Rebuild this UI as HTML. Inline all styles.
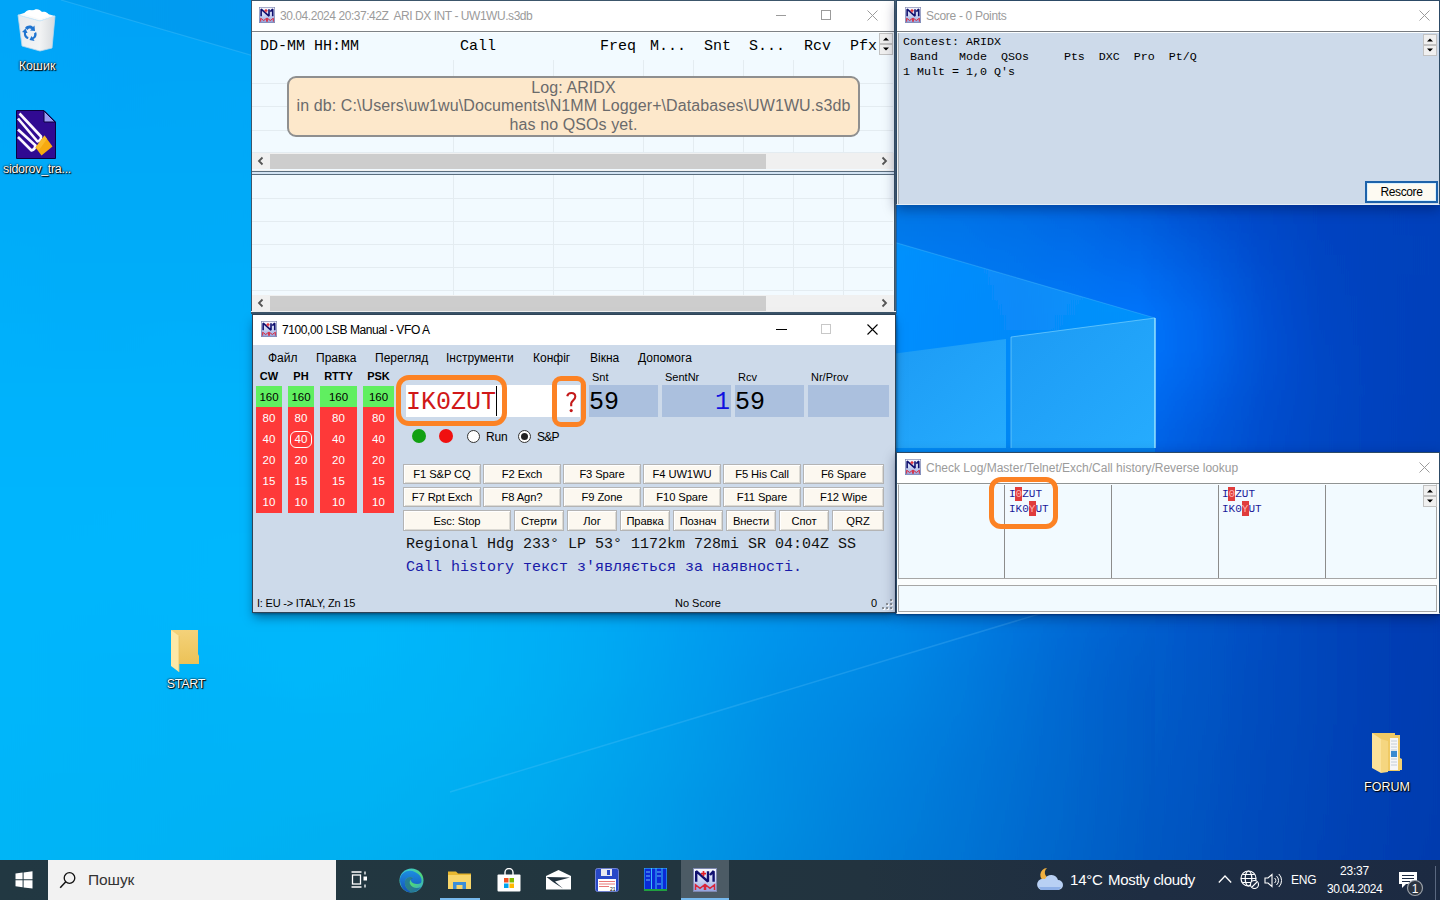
<!DOCTYPE html>
<html><head><meta charset="utf-8">
<style>
*{margin:0;padding:0;box-sizing:border-box}
html,body{width:1440px;height:900px;overflow:hidden}
body{position:relative;font-family:"Liberation Sans",sans-serif;background:#02a8f8;color:#000}
.a{position:absolute;white-space:nowrap}
.mono{font-family:"Liberation Mono",monospace}
.win{position:absolute;background:#fff;border:1px solid #41586c;overflow:hidden}
.tbar{position:absolute;left:0;top:0;right:0;height:31px;background:#fff;border-bottom:1px solid #8e979f}
.ttl{position:absolute;top:8px;font-size:12px;white-space:nowrap;letter-spacing:0}
.dlbl{position:absolute;color:#fff;font-size:12.5px;text-align:center;text-shadow:1px 1px 1px #000,0 0 2px #000,0 0 1px #000;white-space:nowrap}
.btn{position:absolute;background:#fcf8f0;border:1px solid #b4b4b4;box-shadow:inset 1px 1px 0 #fff,inset -1px -1px 0 #dcdad4;font-size:12px;text-align:center;color:#000;white-space:nowrap;letter-spacing:-0.1px}
.band{position:absolute;font-size:11.5px;text-align:center;line-height:21px;height:21px;padding-top:1px}
.g{background:#60ef60;color:#000}
.r{background:#fe3939;color:#fff}
.vl{position:absolute;width:1px;background:#e4ecf1}
.hl{position:absolute;height:1px;background:#e4ecf1}
.sbar{position:absolute;height:16px;background:#f0f0f0}
.thumb{position:absolute;top:1px;height:14px;background:#cdcdcd}
.lbl{position:absolute;font-size:11px;white-space:nowrap}
.fld{position:absolute;background:#abc0de}
</style></head>
<body>
<svg width="0" height="0" style="position:absolute">
<defs>
<linearGradient id="n1g" x1="0" y1="0" x2="0" y2="1"><stop offset="0" stop-color="#fbfbff"/><stop offset="0.55" stop-color="#c8d2f2"/><stop offset="1" stop-color="#8d9fdc"/></linearGradient>
<symbol id="n1mm" viewBox="0 0 24 24">
<rect x="0" y="0" width="24" height="24" fill="url(#n1g)"/>
<rect x="0.5" y="0.5" width="23" height="23" fill="none" stroke="#7f88b0" stroke-width="1"/>
<path d="M3.2 13.8V3.2L15 13.6V3.2M17 7L20.6 3.2V13.8" fill="none" stroke="#10106e" stroke-width="2.4" stroke-linejoin="bevel" stroke-linecap="butt"/>
<path d="M8 5.6h5M10.5 3v5.2" stroke="#e42026" stroke-width="1.7"/>
<path d="M2.5 22V16.8L7 20.3L11.5 16.8V22M12.5 22V16.8L17 20.3L21.5 16.8V22" fill="none" stroke="#d8263a" stroke-width="1.5"/>
</symbol>
</defs>
</svg>

<svg class="a" style="left:0;top:0" width="1440" height="900" viewBox="0 0 1440 900"><defs><linearGradient id="w0" x1="-60" x2="1500" y1="0" y2="0" gradientUnits="userSpaceOnUse"><stop offset="0.0000" stop-color="#07a1f0"/><stop offset="0.0385" stop-color="#069fef"/><stop offset="0.0769" stop-color="#059def"/><stop offset="0.1154" stop-color="#049cf0"/><stop offset="0.1538" stop-color="#039bf1"/><stop offset="0.1923" stop-color="#019bf2"/><stop offset="0.2308" stop-color="#019bf3"/><stop offset="0.2692" stop-color="#019af2"/><stop offset="0.3077" stop-color="#0198f2"/><stop offset="0.3462" stop-color="#0196f1"/><stop offset="0.3846" stop-color="#0193ef"/><stop offset="0.4231" stop-color="#018fed"/><stop offset="0.4615" stop-color="#018aeb"/><stop offset="0.5000" stop-color="#0183e8"/><stop offset="0.5385" stop-color="#017ce5"/><stop offset="0.5769" stop-color="#0174e2"/><stop offset="0.6154" stop-color="#016ce0"/><stop offset="0.6538" stop-color="#0165dd"/><stop offset="0.6923" stop-color="#025dda"/><stop offset="0.7308" stop-color="#0256d5"/><stop offset="0.7692" stop-color="#024fcf"/><stop offset="0.8077" stop-color="#0249ca"/><stop offset="0.8462" stop-color="#0343c5"/><stop offset="0.8846" stop-color="#0340c1"/><stop offset="0.9231" stop-color="#033dbe"/><stop offset="0.9615" stop-color="#033bbb"/><stop offset="1.0000" stop-color="#0338b8"/></linearGradient><linearGradient id="w1" x1="-60" x2="1500" y1="0" y2="0" gradientUnits="userSpaceOnUse"><stop offset="0.0000" stop-color="#07a1ef"/><stop offset="0.0385" stop-color="#069fef"/><stop offset="0.0769" stop-color="#059def"/><stop offset="0.1154" stop-color="#049cef"/><stop offset="0.1538" stop-color="#039bf0"/><stop offset="0.1923" stop-color="#019bf2"/><stop offset="0.2308" stop-color="#019bf2"/><stop offset="0.2692" stop-color="#009af2"/><stop offset="0.3077" stop-color="#0198f1"/><stop offset="0.3462" stop-color="#0196f0"/><stop offset="0.3846" stop-color="#0193ef"/><stop offset="0.4231" stop-color="#018fed"/><stop offset="0.4615" stop-color="#018aea"/><stop offset="0.5000" stop-color="#0183e7"/><stop offset="0.5385" stop-color="#017ce4"/><stop offset="0.5769" stop-color="#0174e1"/><stop offset="0.6154" stop-color="#016dde"/><stop offset="0.6538" stop-color="#0165dc"/><stop offset="0.6923" stop-color="#025ed8"/><stop offset="0.7308" stop-color="#0256d4"/><stop offset="0.7692" stop-color="#024fce"/><stop offset="0.8077" stop-color="#0348c9"/><stop offset="0.8462" stop-color="#0343c4"/><stop offset="0.8846" stop-color="#0340c0"/><stop offset="0.9231" stop-color="#033dbd"/><stop offset="0.9615" stop-color="#033bba"/><stop offset="1.0000" stop-color="#0339b8"/></linearGradient><linearGradient id="w2" x1="-60" x2="1500" y1="0" y2="0" gradientUnits="userSpaceOnUse"><stop offset="0.0000" stop-color="#07a2ef"/><stop offset="0.0385" stop-color="#069fee"/><stop offset="0.0769" stop-color="#059eee"/><stop offset="0.1154" stop-color="#049cef"/><stop offset="0.1538" stop-color="#039cf0"/><stop offset="0.1923" stop-color="#019cf1"/><stop offset="0.2308" stop-color="#019bf2"/><stop offset="0.2692" stop-color="#009af1"/><stop offset="0.3077" stop-color="#0098f1"/><stop offset="0.3462" stop-color="#0196f0"/><stop offset="0.3846" stop-color="#0193ee"/><stop offset="0.4231" stop-color="#018fec"/><stop offset="0.4615" stop-color="#018aea"/><stop offset="0.5000" stop-color="#0183e7"/><stop offset="0.5385" stop-color="#017ce3"/><stop offset="0.5769" stop-color="#0175e0"/><stop offset="0.6154" stop-color="#016ddd"/><stop offset="0.6538" stop-color="#0166db"/><stop offset="0.6923" stop-color="#025fd8"/><stop offset="0.7308" stop-color="#0257d3"/><stop offset="0.7692" stop-color="#024fce"/><stop offset="0.8077" stop-color="#0349c8"/><stop offset="0.8462" stop-color="#0343c3"/><stop offset="0.8846" stop-color="#0340bf"/><stop offset="0.9231" stop-color="#033ebc"/><stop offset="0.9615" stop-color="#033cba"/><stop offset="1.0000" stop-color="#033ab7"/></linearGradient><linearGradient id="w3" x1="-60" x2="1500" y1="0" y2="0" gradientUnits="userSpaceOnUse"><stop offset="0.0000" stop-color="#07a2ee"/><stop offset="0.0385" stop-color="#06a0ee"/><stop offset="0.0769" stop-color="#059eee"/><stop offset="0.1154" stop-color="#049dee"/><stop offset="0.1538" stop-color="#039cef"/><stop offset="0.1923" stop-color="#019cf1"/><stop offset="0.2308" stop-color="#019bf1"/><stop offset="0.2692" stop-color="#009af1"/><stop offset="0.3077" stop-color="#0098f0"/><stop offset="0.3462" stop-color="#0196ef"/><stop offset="0.3846" stop-color="#0193ee"/><stop offset="0.4231" stop-color="#018fec"/><stop offset="0.4615" stop-color="#018ae9"/><stop offset="0.5000" stop-color="#0184e6"/><stop offset="0.5385" stop-color="#017de3"/><stop offset="0.5769" stop-color="#0175e0"/><stop offset="0.6154" stop-color="#016edd"/><stop offset="0.6538" stop-color="#0167db"/><stop offset="0.6923" stop-color="#0260d8"/><stop offset="0.7308" stop-color="#0258d4"/><stop offset="0.7692" stop-color="#0250ce"/><stop offset="0.8077" stop-color="#0349c7"/><stop offset="0.8462" stop-color="#0343c2"/><stop offset="0.8846" stop-color="#0340be"/><stop offset="0.9231" stop-color="#033ebc"/><stop offset="0.9615" stop-color="#033cb9"/><stop offset="1.0000" stop-color="#033ab7"/></linearGradient><linearGradient id="w4" x1="-60" x2="1500" y1="0" y2="0" gradientUnits="userSpaceOnUse"><stop offset="0.0000" stop-color="#07a2ee"/><stop offset="0.0385" stop-color="#06a0ee"/><stop offset="0.0769" stop-color="#059eee"/><stop offset="0.1154" stop-color="#049dee"/><stop offset="0.1538" stop-color="#039cef"/><stop offset="0.1923" stop-color="#029cf0"/><stop offset="0.2308" stop-color="#019bf1"/><stop offset="0.2692" stop-color="#019af1"/><stop offset="0.3077" stop-color="#0198f0"/><stop offset="0.3462" stop-color="#0196ef"/><stop offset="0.3846" stop-color="#0193ee"/><stop offset="0.4231" stop-color="#018fec"/><stop offset="0.4615" stop-color="#018ae9"/><stop offset="0.5000" stop-color="#0184e6"/><stop offset="0.5385" stop-color="#017de3"/><stop offset="0.5769" stop-color="#0176e0"/><stop offset="0.6154" stop-color="#016fdd"/><stop offset="0.6538" stop-color="#0169db"/><stop offset="0.6923" stop-color="#0262d9"/><stop offset="0.7308" stop-color="#025ad5"/><stop offset="0.7692" stop-color="#0352cf"/><stop offset="0.8077" stop-color="#034ac8"/><stop offset="0.8462" stop-color="#0344c2"/><stop offset="0.8846" stop-color="#0340be"/><stop offset="0.9231" stop-color="#033fbc"/><stop offset="0.9615" stop-color="#033db9"/><stop offset="1.0000" stop-color="#033bb7"/></linearGradient><linearGradient id="w5" x1="-60" x2="1500" y1="0" y2="0" gradientUnits="userSpaceOnUse"><stop offset="0.0000" stop-color="#06a2ee"/><stop offset="0.0385" stop-color="#06a0ed"/><stop offset="0.0769" stop-color="#059fee"/><stop offset="0.1154" stop-color="#049dee"/><stop offset="0.1538" stop-color="#039def"/><stop offset="0.1923" stop-color="#029cf0"/><stop offset="0.2308" stop-color="#019bf0"/><stop offset="0.2692" stop-color="#019af0"/><stop offset="0.3077" stop-color="#0198f0"/><stop offset="0.3462" stop-color="#0196ef"/><stop offset="0.3846" stop-color="#0193ee"/><stop offset="0.4231" stop-color="#018fec"/><stop offset="0.4615" stop-color="#018aea"/><stop offset="0.5000" stop-color="#0184e7"/><stop offset="0.5385" stop-color="#017ee4"/><stop offset="0.5769" stop-color="#0177e0"/><stop offset="0.6154" stop-color="#0171de"/><stop offset="0.6538" stop-color="#016bdd"/><stop offset="0.6923" stop-color="#0264db"/><stop offset="0.7308" stop-color="#025dd7"/><stop offset="0.7692" stop-color="#0354d1"/><stop offset="0.8077" stop-color="#034bc9"/><stop offset="0.8462" stop-color="#0344c2"/><stop offset="0.8846" stop-color="#0341be"/><stop offset="0.9231" stop-color="#033fbc"/><stop offset="0.9615" stop-color="#033eb9"/><stop offset="1.0000" stop-color="#033cb7"/></linearGradient><linearGradient id="w6" x1="-60" x2="1500" y1="0" y2="0" gradientUnits="userSpaceOnUse"><stop offset="0.0000" stop-color="#06a3ed"/><stop offset="0.0385" stop-color="#06a1ed"/><stop offset="0.0769" stop-color="#059fed"/><stop offset="0.1154" stop-color="#049eee"/><stop offset="0.1538" stop-color="#039dee"/><stop offset="0.1923" stop-color="#029cef"/><stop offset="0.2308" stop-color="#019bf0"/><stop offset="0.2692" stop-color="#019af0"/><stop offset="0.3077" stop-color="#0198ef"/><stop offset="0.3462" stop-color="#0196ef"/><stop offset="0.3846" stop-color="#0193ed"/><stop offset="0.4231" stop-color="#018fec"/><stop offset="0.4615" stop-color="#018bea"/><stop offset="0.5000" stop-color="#0185e8"/><stop offset="0.5385" stop-color="#017fe5"/><stop offset="0.5769" stop-color="#0179e2"/><stop offset="0.6154" stop-color="#0172df"/><stop offset="0.6538" stop-color="#016ddf"/><stop offset="0.6923" stop-color="#0267de"/><stop offset="0.7308" stop-color="#0260da"/><stop offset="0.7692" stop-color="#0357d4"/><stop offset="0.8077" stop-color="#034ccb"/><stop offset="0.8462" stop-color="#0345c4"/><stop offset="0.8846" stop-color="#0342bf"/><stop offset="0.9231" stop-color="#0340bc"/><stop offset="0.9615" stop-color="#033fba"/><stop offset="1.0000" stop-color="#033db7"/></linearGradient><linearGradient id="w7" x1="-60" x2="1500" y1="0" y2="0" gradientUnits="userSpaceOnUse"><stop offset="0.0000" stop-color="#06a3ed"/><stop offset="0.0385" stop-color="#06a1ed"/><stop offset="0.0769" stop-color="#05a0ed"/><stop offset="0.1154" stop-color="#049eee"/><stop offset="0.1538" stop-color="#039dee"/><stop offset="0.1923" stop-color="#029cef"/><stop offset="0.2308" stop-color="#019bef"/><stop offset="0.2692" stop-color="#019aef"/><stop offset="0.3077" stop-color="#0198ef"/><stop offset="0.3462" stop-color="#0196ee"/><stop offset="0.3846" stop-color="#0193ee"/><stop offset="0.4231" stop-color="#0190ec"/><stop offset="0.4615" stop-color="#018beb"/><stop offset="0.5000" stop-color="#0186e9"/><stop offset="0.5385" stop-color="#0180e7"/><stop offset="0.5769" stop-color="#027ae4"/><stop offset="0.6154" stop-color="#0175e2"/><stop offset="0.6538" stop-color="#0170e4"/><stop offset="0.6923" stop-color="#026be2"/><stop offset="0.7308" stop-color="#0364df"/><stop offset="0.7692" stop-color="#035bd9"/><stop offset="0.8077" stop-color="#034fce"/><stop offset="0.8462" stop-color="#0347c6"/><stop offset="0.8846" stop-color="#0343c0"/><stop offset="0.9231" stop-color="#0341bd"/><stop offset="0.9615" stop-color="#0340ba"/><stop offset="1.0000" stop-color="#033db7"/></linearGradient><linearGradient id="w8" x1="-60" x2="1500" y1="0" y2="0" gradientUnits="userSpaceOnUse"><stop offset="0.0000" stop-color="#06a4ed"/><stop offset="0.0385" stop-color="#06a2ed"/><stop offset="0.0769" stop-color="#05a0ed"/><stop offset="0.1154" stop-color="#049fed"/><stop offset="0.1538" stop-color="#039eee"/><stop offset="0.1923" stop-color="#029dee"/><stop offset="0.2308" stop-color="#029cef"/><stop offset="0.2692" stop-color="#019aef"/><stop offset="0.3077" stop-color="#0199ef"/><stop offset="0.3462" stop-color="#0196ee"/><stop offset="0.3846" stop-color="#0193ee"/><stop offset="0.4231" stop-color="#0190ed"/><stop offset="0.4615" stop-color="#018ceb"/><stop offset="0.5000" stop-color="#0187ea"/><stop offset="0.5385" stop-color="#0282e9"/><stop offset="0.5769" stop-color="#027de8"/><stop offset="0.6154" stop-color="#0278e9"/><stop offset="0.6538" stop-color="#0174e9"/><stop offset="0.6923" stop-color="#026fe7"/><stop offset="0.7308" stop-color="#0369e5"/><stop offset="0.7692" stop-color="#0360e0"/><stop offset="0.8077" stop-color="#0453d4"/><stop offset="0.8462" stop-color="#0449c9"/><stop offset="0.8846" stop-color="#0343c1"/><stop offset="0.9231" stop-color="#0342bd"/><stop offset="0.9615" stop-color="#0341ba"/><stop offset="1.0000" stop-color="#033eb7"/></linearGradient><linearGradient id="w9" x1="-60" x2="1500" y1="0" y2="0" gradientUnits="userSpaceOnUse"><stop offset="0.0000" stop-color="#06a4ed"/><stop offset="0.0385" stop-color="#06a2ed"/><stop offset="0.0769" stop-color="#05a1ed"/><stop offset="0.1154" stop-color="#049fed"/><stop offset="0.1538" stop-color="#039eee"/><stop offset="0.1923" stop-color="#029dee"/><stop offset="0.2308" stop-color="#029cee"/><stop offset="0.2692" stop-color="#019aef"/><stop offset="0.3077" stop-color="#0199ef"/><stop offset="0.3462" stop-color="#0196ee"/><stop offset="0.3846" stop-color="#0194ee"/><stop offset="0.4231" stop-color="#0190ed"/><stop offset="0.4615" stop-color="#018cec"/><stop offset="0.5000" stop-color="#0288ec"/><stop offset="0.5385" stop-color="#0284eb"/><stop offset="0.5769" stop-color="#027fec"/><stop offset="0.6154" stop-color="#027bef"/><stop offset="0.6538" stop-color="#0177ef"/><stop offset="0.6923" stop-color="#0273ec"/><stop offset="0.7308" stop-color="#046eec"/><stop offset="0.7692" stop-color="#0467e9"/><stop offset="0.8077" stop-color="#045add"/><stop offset="0.8462" stop-color="#044ccd"/><stop offset="0.8846" stop-color="#0444c2"/><stop offset="0.9231" stop-color="#0442bd"/><stop offset="0.9615" stop-color="#0441ba"/><stop offset="1.0000" stop-color="#033eb7"/></linearGradient><linearGradient id="w10" x1="-60" x2="1500" y1="0" y2="0" gradientUnits="userSpaceOnUse"><stop offset="0.0000" stop-color="#06a4ec"/><stop offset="0.0385" stop-color="#06a3ec"/><stop offset="0.0769" stop-color="#05a1ec"/><stop offset="0.1154" stop-color="#04a0ed"/><stop offset="0.1538" stop-color="#039eed"/><stop offset="0.1923" stop-color="#039dee"/><stop offset="0.2308" stop-color="#029cee"/><stop offset="0.2692" stop-color="#029bee"/><stop offset="0.3077" stop-color="#0199ee"/><stop offset="0.3462" stop-color="#0197ee"/><stop offset="0.3846" stop-color="#0194ee"/><stop offset="0.4231" stop-color="#0191ee"/><stop offset="0.4615" stop-color="#018ded"/><stop offset="0.5000" stop-color="#0289ed"/><stop offset="0.5385" stop-color="#0285ee"/><stop offset="0.5769" stop-color="#0281ef"/><stop offset="0.6154" stop-color="#027ef2"/><stop offset="0.6538" stop-color="#027af2"/><stop offset="0.6923" stop-color="#0376f1"/><stop offset="0.7308" stop-color="#0473f3"/><stop offset="0.7692" stop-color="#046ef3"/><stop offset="0.8077" stop-color="#0460e5"/><stop offset="0.8462" stop-color="#044fd1"/><stop offset="0.8846" stop-color="#0445c3"/><stop offset="0.9231" stop-color="#0442bd"/><stop offset="0.9615" stop-color="#0441ba"/><stop offset="1.0000" stop-color="#033eb6"/></linearGradient><linearGradient id="w11" x1="-60" x2="1500" y1="0" y2="0" gradientUnits="userSpaceOnUse"><stop offset="0.0000" stop-color="#06a5ec"/><stop offset="0.0385" stop-color="#06a3ec"/><stop offset="0.0769" stop-color="#05a1ec"/><stop offset="0.1154" stop-color="#04a0ed"/><stop offset="0.1538" stop-color="#039fed"/><stop offset="0.1923" stop-color="#039ded"/><stop offset="0.2308" stop-color="#029cee"/><stop offset="0.2692" stop-color="#029bee"/><stop offset="0.3077" stop-color="#0299ee"/><stop offset="0.3462" stop-color="#0197ee"/><stop offset="0.3846" stop-color="#0194ee"/><stop offset="0.4231" stop-color="#0291ee"/><stop offset="0.4615" stop-color="#028eee"/><stop offset="0.5000" stop-color="#028aee"/><stop offset="0.5385" stop-color="#0287ef"/><stop offset="0.5769" stop-color="#0283f1"/><stop offset="0.6154" stop-color="#0280f4"/><stop offset="0.6538" stop-color="#027df5"/><stop offset="0.6923" stop-color="#0379f5"/><stop offset="0.7308" stop-color="#0477f8"/><stop offset="0.7692" stop-color="#0474fa"/><stop offset="0.8077" stop-color="#0365ec"/><stop offset="0.8462" stop-color="#0351d4"/><stop offset="0.8846" stop-color="#0445c4"/><stop offset="0.9231" stop-color="#0442be"/><stop offset="0.9615" stop-color="#0440ba"/><stop offset="1.0000" stop-color="#033eb6"/></linearGradient><linearGradient id="w12" x1="-60" x2="1500" y1="0" y2="0" gradientUnits="userSpaceOnUse"><stop offset="0.0000" stop-color="#06a5ec"/><stop offset="0.0385" stop-color="#06a3ec"/><stop offset="0.0769" stop-color="#05a2ec"/><stop offset="0.1154" stop-color="#04a0ec"/><stop offset="0.1538" stop-color="#039fed"/><stop offset="0.1923" stop-color="#039eed"/><stop offset="0.2308" stop-color="#029ced"/><stop offset="0.2692" stop-color="#029bee"/><stop offset="0.3077" stop-color="#0299ee"/><stop offset="0.3462" stop-color="#0297ee"/><stop offset="0.3846" stop-color="#0295ee"/><stop offset="0.4231" stop-color="#0292ee"/><stop offset="0.4615" stop-color="#028fef"/><stop offset="0.5000" stop-color="#028bef"/><stop offset="0.5385" stop-color="#0288f1"/><stop offset="0.5769" stop-color="#0285f3"/><stop offset="0.6154" stop-color="#0281f5"/><stop offset="0.6538" stop-color="#037ef7"/><stop offset="0.6923" stop-color="#037bf8"/><stop offset="0.7308" stop-color="#0479fb"/><stop offset="0.7692" stop-color="#0475fc"/><stop offset="0.8077" stop-color="#0366ed"/><stop offset="0.8462" stop-color="#0352d5"/><stop offset="0.8846" stop-color="#0446c5"/><stop offset="0.9231" stop-color="#0442be"/><stop offset="0.9615" stop-color="#0440b9"/><stop offset="1.0000" stop-color="#033db5"/></linearGradient><linearGradient id="w13" x1="-60" x2="1500" y1="0" y2="0" gradientUnits="userSpaceOnUse"><stop offset="0.0000" stop-color="#06a6ec"/><stop offset="0.0385" stop-color="#06a4ec"/><stop offset="0.0769" stop-color="#05a2ec"/><stop offset="0.1154" stop-color="#04a1ec"/><stop offset="0.1538" stop-color="#049fec"/><stop offset="0.1923" stop-color="#039eed"/><stop offset="0.2308" stop-color="#029ded"/><stop offset="0.2692" stop-color="#029bed"/><stop offset="0.3077" stop-color="#0299ee"/><stop offset="0.3462" stop-color="#0297ee"/><stop offset="0.3846" stop-color="#0295ee"/><stop offset="0.4231" stop-color="#0292ee"/><stop offset="0.4615" stop-color="#028fef"/><stop offset="0.5000" stop-color="#028cf0"/><stop offset="0.5385" stop-color="#0289f1"/><stop offset="0.5769" stop-color="#0286f3"/><stop offset="0.6154" stop-color="#0282f6"/><stop offset="0.6538" stop-color="#037ff7"/><stop offset="0.6923" stop-color="#037cf9"/><stop offset="0.7308" stop-color="#0478fa"/><stop offset="0.7692" stop-color="#0472f8"/><stop offset="0.8077" stop-color="#0363e9"/><stop offset="0.8462" stop-color="#0351d3"/><stop offset="0.8846" stop-color="#0447c5"/><stop offset="0.9231" stop-color="#0442be"/><stop offset="0.9615" stop-color="#0440b9"/><stop offset="1.0000" stop-color="#033db5"/></linearGradient><linearGradient id="w14" x1="-60" x2="1500" y1="0" y2="0" gradientUnits="userSpaceOnUse"><stop offset="0.0000" stop-color="#06a6eb"/><stop offset="0.0385" stop-color="#06a4eb"/><stop offset="0.0769" stop-color="#05a3eb"/><stop offset="0.1154" stop-color="#04a1ec"/><stop offset="0.1538" stop-color="#04a0ec"/><stop offset="0.1923" stop-color="#039eec"/><stop offset="0.2308" stop-color="#039ded"/><stop offset="0.2692" stop-color="#029bed"/><stop offset="0.3077" stop-color="#0299ed"/><stop offset="0.3462" stop-color="#0297ee"/><stop offset="0.3846" stop-color="#0295ee"/><stop offset="0.4231" stop-color="#0292ee"/><stop offset="0.4615" stop-color="#0290ef"/><stop offset="0.5000" stop-color="#028df0"/><stop offset="0.5385" stop-color="#0289f2"/><stop offset="0.5769" stop-color="#0286f3"/><stop offset="0.6154" stop-color="#0383f5"/><stop offset="0.6538" stop-color="#037ff6"/><stop offset="0.6923" stop-color="#037bf7"/><stop offset="0.7308" stop-color="#0476f7"/><stop offset="0.7692" stop-color="#046df2"/><stop offset="0.8077" stop-color="#035ee3"/><stop offset="0.8462" stop-color="#044fd0"/><stop offset="0.8846" stop-color="#0447c4"/><stop offset="0.9231" stop-color="#0442be"/><stop offset="0.9615" stop-color="#0440b9"/><stop offset="1.0000" stop-color="#033cb4"/></linearGradient><linearGradient id="w15" x1="-60" x2="1500" y1="0" y2="0" gradientUnits="userSpaceOnUse"><stop offset="0.0000" stop-color="#06a6eb"/><stop offset="0.0385" stop-color="#06a4eb"/><stop offset="0.0769" stop-color="#05a3eb"/><stop offset="0.1154" stop-color="#04a1eb"/><stop offset="0.1538" stop-color="#04a0ec"/><stop offset="0.1923" stop-color="#039eec"/><stop offset="0.2308" stop-color="#039dec"/><stop offset="0.2692" stop-color="#029bed"/><stop offset="0.3077" stop-color="#0299ed"/><stop offset="0.3462" stop-color="#0297ed"/><stop offset="0.3846" stop-color="#0295ee"/><stop offset="0.4231" stop-color="#0293ee"/><stop offset="0.4615" stop-color="#0290ef"/><stop offset="0.5000" stop-color="#028df0"/><stop offset="0.5385" stop-color="#028af1"/><stop offset="0.5769" stop-color="#0287f3"/><stop offset="0.6154" stop-color="#0383f4"/><stop offset="0.6538" stop-color="#037ff5"/><stop offset="0.6923" stop-color="#037af4"/><stop offset="0.7308" stop-color="#0473f3"/><stop offset="0.7692" stop-color="#0468eb"/><stop offset="0.8077" stop-color="#035add"/><stop offset="0.8462" stop-color="#044ece"/><stop offset="0.8846" stop-color="#0446c3"/><stop offset="0.9231" stop-color="#0442bd"/><stop offset="0.9615" stop-color="#033fb8"/><stop offset="1.0000" stop-color="#033cb3"/></linearGradient><linearGradient id="w16" x1="-60" x2="1500" y1="0" y2="0" gradientUnits="userSpaceOnUse"><stop offset="0.0000" stop-color="#06a7eb"/><stop offset="0.0385" stop-color="#06a5eb"/><stop offset="0.0769" stop-color="#05a3eb"/><stop offset="0.1154" stop-color="#04a2eb"/><stop offset="0.1538" stop-color="#04a0eb"/><stop offset="0.1923" stop-color="#039fec"/><stop offset="0.2308" stop-color="#039dec"/><stop offset="0.2692" stop-color="#039bec"/><stop offset="0.3077" stop-color="#029aed"/><stop offset="0.3462" stop-color="#0298ed"/><stop offset="0.3846" stop-color="#0295ed"/><stop offset="0.4231" stop-color="#0293ee"/><stop offset="0.4615" stop-color="#0290ee"/><stop offset="0.5000" stop-color="#028def"/><stop offset="0.5385" stop-color="#028af0"/><stop offset="0.5769" stop-color="#0387f1"/><stop offset="0.6154" stop-color="#0383f2"/><stop offset="0.6538" stop-color="#037ef2"/><stop offset="0.6923" stop-color="#0379f1"/><stop offset="0.7308" stop-color="#0470ed"/><stop offset="0.7692" stop-color="#0464e5"/><stop offset="0.8077" stop-color="#0357d9"/><stop offset="0.8462" stop-color="#044dcc"/><stop offset="0.8846" stop-color="#0446c2"/><stop offset="0.9231" stop-color="#0442bc"/><stop offset="0.9615" stop-color="#033fb7"/><stop offset="1.0000" stop-color="#033bb3"/></linearGradient><linearGradient id="w17" x1="-60" x2="1500" y1="0" y2="0" gradientUnits="userSpaceOnUse"><stop offset="0.0000" stop-color="#06a7ea"/><stop offset="0.0385" stop-color="#06a5ea"/><stop offset="0.0769" stop-color="#05a3ea"/><stop offset="0.1154" stop-color="#05a2eb"/><stop offset="0.1538" stop-color="#04a0eb"/><stop offset="0.1923" stop-color="#049feb"/><stop offset="0.2308" stop-color="#039deb"/><stop offset="0.2692" stop-color="#039bec"/><stop offset="0.3077" stop-color="#039aec"/><stop offset="0.3462" stop-color="#0298ec"/><stop offset="0.3846" stop-color="#0295ed"/><stop offset="0.4231" stop-color="#0293ed"/><stop offset="0.4615" stop-color="#0290ee"/><stop offset="0.5000" stop-color="#028dee"/><stop offset="0.5385" stop-color="#038aef"/><stop offset="0.5769" stop-color="#0387f0"/><stop offset="0.6154" stop-color="#0382f0"/><stop offset="0.6538" stop-color="#037def"/><stop offset="0.6923" stop-color="#0377ed"/><stop offset="0.7308" stop-color="#046ee8"/><stop offset="0.7692" stop-color="#0462e0"/><stop offset="0.8077" stop-color="#0456d5"/><stop offset="0.8462" stop-color="#044cca"/><stop offset="0.8846" stop-color="#0446c1"/><stop offset="0.9231" stop-color="#0441bb"/><stop offset="0.9615" stop-color="#033eb6"/><stop offset="1.0000" stop-color="#033ab2"/></linearGradient><linearGradient id="w18" x1="-60" x2="1500" y1="0" y2="0" gradientUnits="userSpaceOnUse"><stop offset="0.0000" stop-color="#06a7ea"/><stop offset="0.0385" stop-color="#06a5ea"/><stop offset="0.0769" stop-color="#05a4ea"/><stop offset="0.1154" stop-color="#05a2ea"/><stop offset="0.1538" stop-color="#04a0ea"/><stop offset="0.1923" stop-color="#049feb"/><stop offset="0.2308" stop-color="#039deb"/><stop offset="0.2692" stop-color="#039beb"/><stop offset="0.3077" stop-color="#039aeb"/><stop offset="0.3462" stop-color="#0397ec"/><stop offset="0.3846" stop-color="#0295ec"/><stop offset="0.4231" stop-color="#0293ec"/><stop offset="0.4615" stop-color="#0290ed"/><stop offset="0.5000" stop-color="#038ded"/><stop offset="0.5385" stop-color="#038aee"/><stop offset="0.5769" stop-color="#0386ee"/><stop offset="0.6154" stop-color="#0382ed"/><stop offset="0.6538" stop-color="#037ceb"/><stop offset="0.6923" stop-color="#0375e8"/><stop offset="0.7308" stop-color="#046ce3"/><stop offset="0.7692" stop-color="#0461db"/><stop offset="0.8077" stop-color="#0456d1"/><stop offset="0.8462" stop-color="#044cc8"/><stop offset="0.8846" stop-color="#0445c0"/><stop offset="0.9231" stop-color="#0441ba"/><stop offset="0.9615" stop-color="#033db5"/><stop offset="1.0000" stop-color="#0339b1"/></linearGradient><linearGradient id="w19" x1="-60" x2="1500" y1="0" y2="0" gradientUnits="userSpaceOnUse"><stop offset="0.0000" stop-color="#06a7ea"/><stop offset="0.0385" stop-color="#06a6ea"/><stop offset="0.0769" stop-color="#05a4ea"/><stop offset="0.1154" stop-color="#05a2ea"/><stop offset="0.1538" stop-color="#04a0ea"/><stop offset="0.1923" stop-color="#049fea"/><stop offset="0.2308" stop-color="#039dea"/><stop offset="0.2692" stop-color="#039beb"/><stop offset="0.3077" stop-color="#0399eb"/><stop offset="0.3462" stop-color="#0397eb"/><stop offset="0.3846" stop-color="#0395eb"/><stop offset="0.4231" stop-color="#0393ec"/><stop offset="0.4615" stop-color="#0390ec"/><stop offset="0.5000" stop-color="#038dec"/><stop offset="0.5385" stop-color="#0389ec"/><stop offset="0.5769" stop-color="#0386eb"/><stop offset="0.6154" stop-color="#0381ea"/><stop offset="0.6538" stop-color="#037be8"/><stop offset="0.6923" stop-color="#0374e4"/><stop offset="0.7308" stop-color="#046bde"/><stop offset="0.7692" stop-color="#0460d7"/><stop offset="0.8077" stop-color="#0456ce"/><stop offset="0.8462" stop-color="#044cc6"/><stop offset="0.8846" stop-color="#0445be"/><stop offset="0.9231" stop-color="#0440b8"/><stop offset="0.9615" stop-color="#033cb4"/><stop offset="1.0000" stop-color="#0339b0"/></linearGradient><linearGradient id="w20" x1="-60" x2="1500" y1="0" y2="0" gradientUnits="userSpaceOnUse"><stop offset="0.0000" stop-color="#06a8e9"/><stop offset="0.0385" stop-color="#06a6e9"/><stop offset="0.0769" stop-color="#05a4e9"/><stop offset="0.1154" stop-color="#05a2e9"/><stop offset="0.1538" stop-color="#04a1e9"/><stop offset="0.1923" stop-color="#049fea"/><stop offset="0.2308" stop-color="#049dea"/><stop offset="0.2692" stop-color="#039bea"/><stop offset="0.3077" stop-color="#0399ea"/><stop offset="0.3462" stop-color="#0397ea"/><stop offset="0.3846" stop-color="#0395ea"/><stop offset="0.4231" stop-color="#0392eb"/><stop offset="0.4615" stop-color="#0390eb"/><stop offset="0.5000" stop-color="#038cea"/><stop offset="0.5385" stop-color="#0389ea"/><stop offset="0.5769" stop-color="#0385e9"/><stop offset="0.6154" stop-color="#0380e7"/><stop offset="0.6538" stop-color="#037ae4"/><stop offset="0.6923" stop-color="#0373e0"/><stop offset="0.7308" stop-color="#046ada"/><stop offset="0.7692" stop-color="#0460d3"/><stop offset="0.8077" stop-color="#0456cc"/><stop offset="0.8462" stop-color="#044cc4"/><stop offset="0.8846" stop-color="#0445bd"/><stop offset="0.9231" stop-color="#0440b7"/><stop offset="0.9615" stop-color="#033cb2"/><stop offset="1.0000" stop-color="#0338af"/></linearGradient><linearGradient id="w21" x1="-60" x2="1500" y1="0" y2="0" gradientUnits="userSpaceOnUse"><stop offset="0.0000" stop-color="#06a8e9"/><stop offset="0.0385" stop-color="#06a6e9"/><stop offset="0.0769" stop-color="#05a4e9"/><stop offset="0.1154" stop-color="#05a2e9"/><stop offset="0.1538" stop-color="#04a1e9"/><stop offset="0.1923" stop-color="#049fe9"/><stop offset="0.2308" stop-color="#049de9"/><stop offset="0.2692" stop-color="#039be9"/><stop offset="0.3077" stop-color="#0399e9"/><stop offset="0.3462" stop-color="#0397e9"/><stop offset="0.3846" stop-color="#0395e9"/><stop offset="0.4231" stop-color="#0392e9"/><stop offset="0.4615" stop-color="#038fe9"/><stop offset="0.5000" stop-color="#038ce9"/><stop offset="0.5385" stop-color="#0388e8"/><stop offset="0.5769" stop-color="#0384e6"/><stop offset="0.6154" stop-color="#037fe4"/><stop offset="0.6538" stop-color="#0379e1"/><stop offset="0.6923" stop-color="#0372dc"/><stop offset="0.7308" stop-color="#0469d6"/><stop offset="0.7692" stop-color="#045fd0"/><stop offset="0.8077" stop-color="#0456c9"/><stop offset="0.8462" stop-color="#034dc2"/><stop offset="0.8846" stop-color="#0345bc"/><stop offset="0.9231" stop-color="#043fb6"/><stop offset="0.9615" stop-color="#033bb1"/><stop offset="1.0000" stop-color="#0338ae"/></linearGradient><linearGradient id="w22" x1="-60" x2="1500" y1="0" y2="0" gradientUnits="userSpaceOnUse"><stop offset="0.0000" stop-color="#06a8e8"/><stop offset="0.0385" stop-color="#06a6e8"/><stop offset="0.0769" stop-color="#05a4e8"/><stop offset="0.1154" stop-color="#05a2e8"/><stop offset="0.1538" stop-color="#05a1e8"/><stop offset="0.1923" stop-color="#049fe8"/><stop offset="0.2308" stop-color="#049de8"/><stop offset="0.2692" stop-color="#049be8"/><stop offset="0.3077" stop-color="#0399e8"/><stop offset="0.3462" stop-color="#0397e8"/><stop offset="0.3846" stop-color="#0394e8"/><stop offset="0.4231" stop-color="#0391e8"/><stop offset="0.4615" stop-color="#038fe8"/><stop offset="0.5000" stop-color="#038be7"/><stop offset="0.5385" stop-color="#0388e6"/><stop offset="0.5769" stop-color="#0383e4"/><stop offset="0.6154" stop-color="#037ee1"/><stop offset="0.6538" stop-color="#0378de"/><stop offset="0.6923" stop-color="#0371d9"/><stop offset="0.7308" stop-color="#0469d3"/><stop offset="0.7692" stop-color="#045fce"/><stop offset="0.8077" stop-color="#0355c7"/><stop offset="0.8462" stop-color="#034dc1"/><stop offset="0.8846" stop-color="#0345ba"/><stop offset="0.9231" stop-color="#043fb5"/><stop offset="0.9615" stop-color="#033bb1"/><stop offset="1.0000" stop-color="#0337ad"/></linearGradient><linearGradient id="w23" x1="-60" x2="1500" y1="0" y2="0" gradientUnits="userSpaceOnUse"><stop offset="0.0000" stop-color="#07a8e8"/><stop offset="0.0385" stop-color="#06a6e8"/><stop offset="0.0769" stop-color="#06a4e8"/><stop offset="0.1154" stop-color="#05a2e8"/><stop offset="0.1538" stop-color="#05a1e8"/><stop offset="0.1923" stop-color="#049fe8"/><stop offset="0.2308" stop-color="#049de8"/><stop offset="0.2692" stop-color="#049be8"/><stop offset="0.3077" stop-color="#0399e8"/><stop offset="0.3462" stop-color="#0396e7"/><stop offset="0.3846" stop-color="#0394e7"/><stop offset="0.4231" stop-color="#0391e7"/><stop offset="0.4615" stop-color="#038ee6"/><stop offset="0.5000" stop-color="#038be5"/><stop offset="0.5385" stop-color="#0387e4"/><stop offset="0.5769" stop-color="#0382e2"/><stop offset="0.6154" stop-color="#037ddf"/><stop offset="0.6538" stop-color="#0377db"/><stop offset="0.6923" stop-color="#0370d6"/><stop offset="0.7308" stop-color="#0468d1"/><stop offset="0.7692" stop-color="#045ecb"/><stop offset="0.8077" stop-color="#0355c5"/><stop offset="0.8462" stop-color="#034cbf"/><stop offset="0.8846" stop-color="#0345ba"/><stop offset="0.9231" stop-color="#033fb4"/><stop offset="0.9615" stop-color="#033bb0"/><stop offset="1.0000" stop-color="#0337ac"/></linearGradient><linearGradient id="w24" x1="-60" x2="1500" y1="0" y2="0" gradientUnits="userSpaceOnUse"><stop offset="0.0000" stop-color="#07a8e7"/><stop offset="0.0385" stop-color="#06a6e7"/><stop offset="0.0769" stop-color="#06a4e7"/><stop offset="0.1154" stop-color="#05a2e7"/><stop offset="0.1538" stop-color="#05a0e7"/><stop offset="0.1923" stop-color="#049fe7"/><stop offset="0.2308" stop-color="#049de7"/><stop offset="0.2692" stop-color="#049ae7"/><stop offset="0.3077" stop-color="#0498e7"/><stop offset="0.3462" stop-color="#0396e6"/><stop offset="0.3846" stop-color="#0393e6"/><stop offset="0.4231" stop-color="#0390e5"/><stop offset="0.4615" stop-color="#038de5"/><stop offset="0.5000" stop-color="#038ae4"/><stop offset="0.5385" stop-color="#0386e2"/><stop offset="0.5769" stop-color="#0381e0"/><stop offset="0.6154" stop-color="#037cdd"/><stop offset="0.6538" stop-color="#0376d9"/><stop offset="0.6923" stop-color="#036fd4"/><stop offset="0.7308" stop-color="#0467cf"/><stop offset="0.7692" stop-color="#045eca"/><stop offset="0.8077" stop-color="#0355c4"/><stop offset="0.8462" stop-color="#034cbe"/><stop offset="0.8846" stop-color="#0345b9"/><stop offset="0.9231" stop-color="#033fb4"/><stop offset="0.9615" stop-color="#033bb0"/><stop offset="1.0000" stop-color="#0337ac"/></linearGradient><linearGradient id="w25" x1="-60" x2="1500" y1="0" y2="0" gradientUnits="userSpaceOnUse"><stop offset="0.0000" stop-color="#07a8e7"/><stop offset="0.0385" stop-color="#06a6e7"/><stop offset="0.0769" stop-color="#06a4e6"/><stop offset="0.1154" stop-color="#05a2e6"/><stop offset="0.1538" stop-color="#05a0e6"/><stop offset="0.1923" stop-color="#049ee6"/><stop offset="0.2308" stop-color="#049ce6"/><stop offset="0.2692" stop-color="#049ae6"/><stop offset="0.3077" stop-color="#0498e6"/><stop offset="0.3462" stop-color="#0495e5"/><stop offset="0.3846" stop-color="#0393e5"/><stop offset="0.4231" stop-color="#0390e4"/><stop offset="0.4615" stop-color="#038ce3"/><stop offset="0.5000" stop-color="#0389e2"/><stop offset="0.5385" stop-color="#0385e0"/><stop offset="0.5769" stop-color="#0380dd"/><stop offset="0.6154" stop-color="#037bda"/><stop offset="0.6538" stop-color="#0375d6"/><stop offset="0.6923" stop-color="#036ed2"/><stop offset="0.7308" stop-color="#0366cd"/><stop offset="0.7692" stop-color="#035dc8"/><stop offset="0.8077" stop-color="#0354c3"/><stop offset="0.8462" stop-color="#034cbd"/><stop offset="0.8846" stop-color="#0345b8"/><stop offset="0.9231" stop-color="#033fb4"/><stop offset="0.9615" stop-color="#033baf"/><stop offset="1.0000" stop-color="#0337ac"/></linearGradient><linearGradient id="w26" x1="-60" x2="1500" y1="0" y2="0" gradientUnits="userSpaceOnUse"><stop offset="0.0000" stop-color="#07a8e6"/><stop offset="0.0385" stop-color="#06a6e6"/><stop offset="0.0769" stop-color="#06a4e6"/><stop offset="0.1154" stop-color="#05a2e6"/><stop offset="0.1538" stop-color="#05a0e5"/><stop offset="0.1923" stop-color="#059ee5"/><stop offset="0.2308" stop-color="#049ce5"/><stop offset="0.2692" stop-color="#049ae5"/><stop offset="0.3077" stop-color="#0497e4"/><stop offset="0.3462" stop-color="#0495e4"/><stop offset="0.3846" stop-color="#0492e3"/><stop offset="0.4231" stop-color="#038fe3"/><stop offset="0.4615" stop-color="#038ce1"/><stop offset="0.5000" stop-color="#0388e0"/><stop offset="0.5385" stop-color="#0384de"/><stop offset="0.5769" stop-color="#037fdb"/><stop offset="0.6154" stop-color="#037ad8"/><stop offset="0.6538" stop-color="#0373d5"/><stop offset="0.6923" stop-color="#036dd0"/><stop offset="0.7308" stop-color="#0365cc"/><stop offset="0.7692" stop-color="#035cc7"/><stop offset="0.8077" stop-color="#0353c2"/><stop offset="0.8462" stop-color="#034bbc"/><stop offset="0.8846" stop-color="#0344b8"/><stop offset="0.9231" stop-color="#033fb3"/><stop offset="0.9615" stop-color="#033baf"/><stop offset="1.0000" stop-color="#0337ab"/></linearGradient><linearGradient id="w27" x1="-60" x2="1500" y1="0" y2="0" gradientUnits="userSpaceOnUse"><stop offset="0.0000" stop-color="#07a8e6"/><stop offset="0.0385" stop-color="#06a6e5"/><stop offset="0.0769" stop-color="#06a4e5"/><stop offset="0.1154" stop-color="#05a2e5"/><stop offset="0.1538" stop-color="#05a0e5"/><stop offset="0.1923" stop-color="#059ee4"/><stop offset="0.2308" stop-color="#049ce4"/><stop offset="0.2692" stop-color="#0499e4"/><stop offset="0.3077" stop-color="#0497e3"/><stop offset="0.3462" stop-color="#0494e3"/><stop offset="0.3846" stop-color="#0491e2"/><stop offset="0.4231" stop-color="#048ee1"/><stop offset="0.4615" stop-color="#038be0"/><stop offset="0.5000" stop-color="#0387de"/><stop offset="0.5385" stop-color="#0383dc"/><stop offset="0.5769" stop-color="#037eda"/><stop offset="0.6154" stop-color="#0378d6"/><stop offset="0.6538" stop-color="#0472d3"/><stop offset="0.6923" stop-color="#046bcf"/><stop offset="0.7308" stop-color="#0464ca"/><stop offset="0.7692" stop-color="#045bc6"/><stop offset="0.8077" stop-color="#0353c1"/><stop offset="0.8462" stop-color="#034bbc"/><stop offset="0.8846" stop-color="#0344b7"/><stop offset="0.9231" stop-color="#043fb3"/><stop offset="0.9615" stop-color="#033baf"/><stop offset="1.0000" stop-color="#0336ab"/></linearGradient><linearGradient id="w28" x1="-60" x2="1500" y1="0" y2="0" gradientUnits="userSpaceOnUse"><stop offset="0.0000" stop-color="#07a8e5"/><stop offset="0.0385" stop-color="#06a6e5"/><stop offset="0.0769" stop-color="#06a4e4"/><stop offset="0.1154" stop-color="#06a2e4"/><stop offset="0.1538" stop-color="#05a0e4"/><stop offset="0.1923" stop-color="#059ee3"/><stop offset="0.2308" stop-color="#059be3"/><stop offset="0.2692" stop-color="#0499e3"/><stop offset="0.3077" stop-color="#0496e2"/><stop offset="0.3462" stop-color="#0494e2"/><stop offset="0.3846" stop-color="#0491e1"/><stop offset="0.4231" stop-color="#048de0"/><stop offset="0.4615" stop-color="#048ade"/><stop offset="0.5000" stop-color="#0486dd"/><stop offset="0.5385" stop-color="#0482da"/><stop offset="0.5769" stop-color="#047dd8"/><stop offset="0.6154" stop-color="#0477d5"/><stop offset="0.6538" stop-color="#0471d1"/><stop offset="0.6923" stop-color="#046acd"/><stop offset="0.7308" stop-color="#0463c9"/><stop offset="0.7692" stop-color="#045bc4"/><stop offset="0.8077" stop-color="#0452c0"/><stop offset="0.8462" stop-color="#034abb"/><stop offset="0.8846" stop-color="#0344b6"/><stop offset="0.9231" stop-color="#043fb2"/><stop offset="0.9615" stop-color="#033bae"/><stop offset="1.0000" stop-color="#0336ab"/></linearGradient><linearGradient id="w29" x1="-60" x2="1500" y1="0" y2="0" gradientUnits="userSpaceOnUse"><stop offset="0.0000" stop-color="#07a8e4"/><stop offset="0.0385" stop-color="#06a6e4"/><stop offset="0.0769" stop-color="#06a4e4"/><stop offset="0.1154" stop-color="#06a2e3"/><stop offset="0.1538" stop-color="#059fe3"/><stop offset="0.1923" stop-color="#059de3"/><stop offset="0.2308" stop-color="#059be2"/><stop offset="0.2692" stop-color="#0498e2"/><stop offset="0.3077" stop-color="#0496e1"/><stop offset="0.3462" stop-color="#0493e0"/><stop offset="0.3846" stop-color="#0490df"/><stop offset="0.4231" stop-color="#048dde"/><stop offset="0.4615" stop-color="#0489dd"/><stop offset="0.5000" stop-color="#0485db"/><stop offset="0.5385" stop-color="#0481d9"/><stop offset="0.5769" stop-color="#047cd6"/><stop offset="0.6154" stop-color="#0476d3"/><stop offset="0.6538" stop-color="#0470cf"/><stop offset="0.6923" stop-color="#0469cc"/><stop offset="0.7308" stop-color="#0462c8"/><stop offset="0.7692" stop-color="#045ac3"/><stop offset="0.8077" stop-color="#0452bf"/><stop offset="0.8462" stop-color="#044aba"/><stop offset="0.8846" stop-color="#0443b6"/><stop offset="0.9231" stop-color="#043fb2"/><stop offset="0.9615" stop-color="#033aae"/><stop offset="1.0000" stop-color="#0336aa"/></linearGradient><linearGradient id="w30" x1="-60" x2="1500" y1="0" y2="0" gradientUnits="userSpaceOnUse"><stop offset="0.0000" stop-color="#07a8e4"/><stop offset="0.0385" stop-color="#06a6e3"/><stop offset="0.0769" stop-color="#06a4e3"/><stop offset="0.1154" stop-color="#06a1e3"/><stop offset="0.1538" stop-color="#059fe2"/><stop offset="0.1923" stop-color="#059de2"/><stop offset="0.2308" stop-color="#059ae1"/><stop offset="0.2692" stop-color="#0498e1"/><stop offset="0.3077" stop-color="#0495e0"/><stop offset="0.3462" stop-color="#0492df"/><stop offset="0.3846" stop-color="#048fde"/><stop offset="0.4231" stop-color="#048cdd"/><stop offset="0.4615" stop-color="#0488db"/><stop offset="0.5000" stop-color="#0484d9"/><stop offset="0.5385" stop-color="#047fd7"/><stop offset="0.5769" stop-color="#047ad4"/><stop offset="0.6154" stop-color="#0475d1"/><stop offset="0.6538" stop-color="#046fce"/><stop offset="0.6923" stop-color="#0468ca"/><stop offset="0.7308" stop-color="#0461c6"/><stop offset="0.7692" stop-color="#0459c2"/><stop offset="0.8077" stop-color="#0451be"/><stop offset="0.8462" stop-color="#044ab9"/><stop offset="0.8846" stop-color="#0443b5"/><stop offset="0.9231" stop-color="#043eb1"/><stop offset="0.9615" stop-color="#033aad"/><stop offset="1.0000" stop-color="#0336aa"/></linearGradient><linearGradient id="w31" x1="-60" x2="1500" y1="0" y2="0" gradientUnits="userSpaceOnUse"><stop offset="0.0000" stop-color="#07a8e3"/><stop offset="0.0385" stop-color="#07a6e3"/><stop offset="0.0769" stop-color="#06a3e2"/><stop offset="0.1154" stop-color="#06a1e2"/><stop offset="0.1538" stop-color="#059fe1"/><stop offset="0.1923" stop-color="#059ce1"/><stop offset="0.2308" stop-color="#059ae0"/><stop offset="0.2692" stop-color="#0597e0"/><stop offset="0.3077" stop-color="#0495df"/><stop offset="0.3462" stop-color="#0492de"/><stop offset="0.3846" stop-color="#048edd"/><stop offset="0.4231" stop-color="#048bdb"/><stop offset="0.4615" stop-color="#0487da"/><stop offset="0.5000" stop-color="#0483d8"/><stop offset="0.5385" stop-color="#047ed5"/><stop offset="0.5769" stop-color="#0479d3"/><stop offset="0.6154" stop-color="#0474d0"/><stop offset="0.6538" stop-color="#046ecc"/><stop offset="0.6923" stop-color="#0467c9"/><stop offset="0.7308" stop-color="#0460c5"/><stop offset="0.7692" stop-color="#0458c1"/><stop offset="0.8077" stop-color="#0451bd"/><stop offset="0.8462" stop-color="#044ab8"/><stop offset="0.8846" stop-color="#0443b4"/><stop offset="0.9231" stop-color="#043eb0"/><stop offset="0.9615" stop-color="#043aad"/><stop offset="1.0000" stop-color="#0336a9"/></linearGradient><linearGradient id="q0" x1="-60" x2="1500" y1="0" y2="0" gradientUnits="userSpaceOnUse"><stop offset="0.0000" stop-color="#00a6f9"/><stop offset="0.0385" stop-color="#00a5f8"/><stop offset="0.0769" stop-color="#00a4f8"/><stop offset="0.1154" stop-color="#00a3f8"/><stop offset="0.1538" stop-color="#01a2f7"/><stop offset="0.1923" stop-color="#02a2f7"/><stop offset="0.2308" stop-color="#02a2f7"/><stop offset="0.2692" stop-color="#02a2f7"/><stop offset="0.3077" stop-color="#02a2f7"/><stop offset="0.3462" stop-color="#02a1f7"/><stop offset="0.3846" stop-color="#02a0f7"/><stop offset="0.4231" stop-color="#02a0f7"/><stop offset="0.4615" stop-color="#039ff6"/><stop offset="0.5000" stop-color="#049ef6"/><stop offset="0.5385" stop-color="#059cf5"/><stop offset="0.5769" stop-color="#059bf5"/><stop offset="0.6154" stop-color="#0699f5"/><stop offset="0.6538" stop-color="#0797f5"/><stop offset="0.6923" stop-color="#0796f5"/><stop offset="0.7308" stop-color="#0795f6"/><stop offset="0.7692" stop-color="#0794f6"/><stop offset="0.8077" stop-color="#0692f5"/><stop offset="0.8462" stop-color="#0590f4"/><stop offset="0.8846" stop-color="#058df3"/><stop offset="0.9231" stop-color="#048af0"/><stop offset="0.9615" stop-color="#0385ee"/><stop offset="1.0000" stop-color="#0381eb"/></linearGradient><linearGradient id="q1" x1="-60" x2="1500" y1="0" y2="0" gradientUnits="userSpaceOnUse"><stop offset="0.0000" stop-color="#00a7f9"/><stop offset="0.0385" stop-color="#00a5f8"/><stop offset="0.0769" stop-color="#00a4f8"/><stop offset="0.1154" stop-color="#00a3f7"/><stop offset="0.1538" stop-color="#02a3f7"/><stop offset="0.1923" stop-color="#02a3f7"/><stop offset="0.2308" stop-color="#02a3f7"/><stop offset="0.2692" stop-color="#02a3f7"/><stop offset="0.3077" stop-color="#02a2f7"/><stop offset="0.3462" stop-color="#02a1f7"/><stop offset="0.3846" stop-color="#02a1f7"/><stop offset="0.4231" stop-color="#02a0f7"/><stop offset="0.4615" stop-color="#039ff6"/><stop offset="0.5000" stop-color="#049ef6"/><stop offset="0.5385" stop-color="#049cf6"/><stop offset="0.5769" stop-color="#059af5"/><stop offset="0.6154" stop-color="#0698f5"/><stop offset="0.6538" stop-color="#0796f5"/><stop offset="0.6923" stop-color="#0795f6"/><stop offset="0.7308" stop-color="#0794f6"/><stop offset="0.7692" stop-color="#0793f6"/><stop offset="0.8077" stop-color="#0692f5"/><stop offset="0.8462" stop-color="#0590f4"/><stop offset="0.8846" stop-color="#048df3"/><stop offset="0.9231" stop-color="#0489f0"/><stop offset="0.9615" stop-color="#0385ee"/><stop offset="1.0000" stop-color="#0380eb"/></linearGradient><linearGradient id="q2" x1="-60" x2="1500" y1="0" y2="0" gradientUnits="userSpaceOnUse"><stop offset="0.0000" stop-color="#00a7f9"/><stop offset="0.0385" stop-color="#00a6f8"/><stop offset="0.0769" stop-color="#00a5f8"/><stop offset="0.1154" stop-color="#00a4f7"/><stop offset="0.1538" stop-color="#02a4f7"/><stop offset="0.1923" stop-color="#02a4f7"/><stop offset="0.2308" stop-color="#02a4f7"/><stop offset="0.2692" stop-color="#02a4f8"/><stop offset="0.3077" stop-color="#02a3f8"/><stop offset="0.3462" stop-color="#01a2f8"/><stop offset="0.3846" stop-color="#02a1f7"/><stop offset="0.4231" stop-color="#02a0f7"/><stop offset="0.4615" stop-color="#039ff6"/><stop offset="0.5000" stop-color="#039df6"/><stop offset="0.5385" stop-color="#049cf6"/><stop offset="0.5769" stop-color="#059af6"/><stop offset="0.6154" stop-color="#0697f6"/><stop offset="0.6538" stop-color="#0795f6"/><stop offset="0.6923" stop-color="#0794f6"/><stop offset="0.7308" stop-color="#0793f6"/><stop offset="0.7692" stop-color="#0793f6"/><stop offset="0.8077" stop-color="#0691f6"/><stop offset="0.8462" stop-color="#058ff4"/><stop offset="0.8846" stop-color="#048cf3"/><stop offset="0.9231" stop-color="#0388f0"/><stop offset="0.9615" stop-color="#0384ed"/><stop offset="1.0000" stop-color="#037fea"/></linearGradient><linearGradient id="q3" x1="-60" x2="1500" y1="0" y2="0" gradientUnits="userSpaceOnUse"><stop offset="0.0000" stop-color="#00a8f9"/><stop offset="0.0385" stop-color="#00a7f8"/><stop offset="0.0769" stop-color="#00a6f8"/><stop offset="0.1154" stop-color="#01a5f8"/><stop offset="0.1538" stop-color="#02a5f7"/><stop offset="0.1923" stop-color="#02a5f7"/><stop offset="0.2308" stop-color="#02a5f8"/><stop offset="0.2692" stop-color="#02a4f8"/><stop offset="0.3077" stop-color="#02a3f8"/><stop offset="0.3462" stop-color="#01a2f8"/><stop offset="0.3846" stop-color="#02a1f7"/><stop offset="0.4231" stop-color="#02a0f7"/><stop offset="0.4615" stop-color="#039ef7"/><stop offset="0.5000" stop-color="#039df6"/><stop offset="0.5385" stop-color="#049bf6"/><stop offset="0.5769" stop-color="#0599f6"/><stop offset="0.6154" stop-color="#0696f6"/><stop offset="0.6538" stop-color="#0794f6"/><stop offset="0.6923" stop-color="#0793f6"/><stop offset="0.7308" stop-color="#0793f6"/><stop offset="0.7692" stop-color="#0792f6"/><stop offset="0.8077" stop-color="#0691f6"/><stop offset="0.8462" stop-color="#058ff5"/><stop offset="0.8846" stop-color="#048bf2"/><stop offset="0.9231" stop-color="#0387f0"/><stop offset="0.9615" stop-color="#0382ed"/><stop offset="1.0000" stop-color="#027de9"/></linearGradient><linearGradient id="q4" x1="-60" x2="1500" y1="0" y2="0" gradientUnits="userSpaceOnUse"><stop offset="0.0000" stop-color="#00a9f9"/><stop offset="0.0385" stop-color="#00a8f8"/><stop offset="0.0769" stop-color="#00a7f8"/><stop offset="0.1154" stop-color="#01a6f8"/><stop offset="0.1538" stop-color="#02a7f7"/><stop offset="0.1923" stop-color="#02a7f8"/><stop offset="0.2308" stop-color="#02a6f8"/><stop offset="0.2692" stop-color="#02a5f8"/><stop offset="0.3077" stop-color="#02a4f8"/><stop offset="0.3462" stop-color="#01a2f8"/><stop offset="0.3846" stop-color="#02a1f8"/><stop offset="0.4231" stop-color="#02a0f7"/><stop offset="0.4615" stop-color="#029ef7"/><stop offset="0.5000" stop-color="#039df7"/><stop offset="0.5385" stop-color="#049bf6"/><stop offset="0.5769" stop-color="#0598f7"/><stop offset="0.6154" stop-color="#0695f7"/><stop offset="0.6538" stop-color="#0793f6"/><stop offset="0.6923" stop-color="#0792f6"/><stop offset="0.7308" stop-color="#0792f6"/><stop offset="0.7692" stop-color="#0792f7"/><stop offset="0.8077" stop-color="#0591f6"/><stop offset="0.8462" stop-color="#048ef5"/><stop offset="0.8846" stop-color="#038bf2"/><stop offset="0.9231" stop-color="#0386ef"/><stop offset="0.9615" stop-color="#0281ec"/><stop offset="1.0000" stop-color="#027ce8"/></linearGradient><linearGradient id="q5" x1="-60" x2="1500" y1="0" y2="0" gradientUnits="userSpaceOnUse"><stop offset="0.0000" stop-color="#00aaf9"/><stop offset="0.0385" stop-color="#00a9f8"/><stop offset="0.0769" stop-color="#00a8f8"/><stop offset="0.1154" stop-color="#00a8f8"/><stop offset="0.1538" stop-color="#01a8f8"/><stop offset="0.1923" stop-color="#02a8f8"/><stop offset="0.2308" stop-color="#02a7f8"/><stop offset="0.2692" stop-color="#02a6f8"/><stop offset="0.3077" stop-color="#02a5f8"/><stop offset="0.3462" stop-color="#01a3f8"/><stop offset="0.3846" stop-color="#02a1f8"/><stop offset="0.4231" stop-color="#029ff8"/><stop offset="0.4615" stop-color="#029ef7"/><stop offset="0.5000" stop-color="#039cf7"/><stop offset="0.5385" stop-color="#039bf7"/><stop offset="0.5769" stop-color="#0498f7"/><stop offset="0.6154" stop-color="#0594f7"/><stop offset="0.6538" stop-color="#0792f7"/><stop offset="0.6923" stop-color="#0891f6"/><stop offset="0.7308" stop-color="#0891f7"/><stop offset="0.7692" stop-color="#0692f7"/><stop offset="0.8077" stop-color="#0591f7"/><stop offset="0.8462" stop-color="#048ef5"/><stop offset="0.8846" stop-color="#038af2"/><stop offset="0.9231" stop-color="#0285ef"/><stop offset="0.9615" stop-color="#0280eb"/><stop offset="1.0000" stop-color="#027ae7"/></linearGradient><linearGradient id="q6" x1="-60" x2="1500" y1="0" y2="0" gradientUnits="userSpaceOnUse"><stop offset="0.0000" stop-color="#00abf9"/><stop offset="0.0385" stop-color="#00aaf9"/><stop offset="0.0769" stop-color="#00a9f8"/><stop offset="0.1154" stop-color="#00a9f8"/><stop offset="0.1538" stop-color="#01a9f8"/><stop offset="0.1923" stop-color="#01a9f8"/><stop offset="0.2308" stop-color="#02a8f8"/><stop offset="0.2692" stop-color="#02a7f8"/><stop offset="0.3077" stop-color="#02a5f8"/><stop offset="0.3462" stop-color="#01a3f8"/><stop offset="0.3846" stop-color="#02a1f8"/><stop offset="0.4231" stop-color="#029ff8"/><stop offset="0.4615" stop-color="#029ef8"/><stop offset="0.5000" stop-color="#039cf8"/><stop offset="0.5385" stop-color="#039af8"/><stop offset="0.5769" stop-color="#0497f8"/><stop offset="0.6154" stop-color="#0593f8"/><stop offset="0.6538" stop-color="#0690f8"/><stop offset="0.6923" stop-color="#088ff7"/><stop offset="0.7308" stop-color="#0890f7"/><stop offset="0.7692" stop-color="#0691f8"/><stop offset="0.8077" stop-color="#0590f7"/><stop offset="0.8462" stop-color="#038df5"/><stop offset="0.8846" stop-color="#0289f2"/><stop offset="0.9231" stop-color="#0284ee"/><stop offset="0.9615" stop-color="#027eea"/><stop offset="1.0000" stop-color="#0178e6"/></linearGradient><linearGradient id="q7" x1="-60" x2="1500" y1="0" y2="0" gradientUnits="userSpaceOnUse"><stop offset="0.0000" stop-color="#00abfa"/><stop offset="0.0385" stop-color="#00aaf9"/><stop offset="0.0769" stop-color="#00aaf8"/><stop offset="0.1154" stop-color="#00aaf8"/><stop offset="0.1538" stop-color="#01aaf8"/><stop offset="0.1923" stop-color="#01aaf8"/><stop offset="0.2308" stop-color="#01a9f8"/><stop offset="0.2692" stop-color="#01a8f9"/><stop offset="0.3077" stop-color="#01a6f9"/><stop offset="0.3462" stop-color="#01a4f9"/><stop offset="0.3846" stop-color="#02a1f8"/><stop offset="0.4231" stop-color="#029ff8"/><stop offset="0.4615" stop-color="#029df8"/><stop offset="0.5000" stop-color="#029bf9"/><stop offset="0.5385" stop-color="#0399f9"/><stop offset="0.5769" stop-color="#0396fa"/><stop offset="0.6154" stop-color="#0492fa"/><stop offset="0.6538" stop-color="#068ff9"/><stop offset="0.6923" stop-color="#088ef7"/><stop offset="0.7308" stop-color="#0890f8"/><stop offset="0.7692" stop-color="#0691f8"/><stop offset="0.8077" stop-color="#0490f7"/><stop offset="0.8462" stop-color="#038df5"/><stop offset="0.8846" stop-color="#0288f1"/><stop offset="0.9231" stop-color="#0282ed"/><stop offset="0.9615" stop-color="#017ce9"/><stop offset="1.0000" stop-color="#0176e5"/></linearGradient><linearGradient id="q8" x1="-60" x2="1500" y1="0" y2="0" gradientUnits="userSpaceOnUse"><stop offset="0.0000" stop-color="#00acfa"/><stop offset="0.0385" stop-color="#00abf9"/><stop offset="0.0769" stop-color="#00abf9"/><stop offset="0.1154" stop-color="#00abf8"/><stop offset="0.1538" stop-color="#01abf8"/><stop offset="0.1923" stop-color="#01abf9"/><stop offset="0.2308" stop-color="#01aaf9"/><stop offset="0.2692" stop-color="#01a9f9"/><stop offset="0.3077" stop-color="#01a7f9"/><stop offset="0.3462" stop-color="#02a4f9"/><stop offset="0.3846" stop-color="#02a2f9"/><stop offset="0.4231" stop-color="#029ff9"/><stop offset="0.4615" stop-color="#029df9"/><stop offset="0.5000" stop-color="#029bf9"/><stop offset="0.5385" stop-color="#0298fa"/><stop offset="0.5769" stop-color="#0295fb"/><stop offset="0.6154" stop-color="#0391fb"/><stop offset="0.6538" stop-color="#068dfa"/><stop offset="0.6923" stop-color="#088df8"/><stop offset="0.7308" stop-color="#0890f8"/><stop offset="0.7692" stop-color="#0592f9"/><stop offset="0.8077" stop-color="#0390f8"/><stop offset="0.8462" stop-color="#028cf5"/><stop offset="0.8846" stop-color="#0186f0"/><stop offset="0.9231" stop-color="#0180ec"/><stop offset="0.9615" stop-color="#017ae7"/><stop offset="1.0000" stop-color="#0174e3"/></linearGradient><linearGradient id="q9" x1="-60" x2="1500" y1="0" y2="0" gradientUnits="userSpaceOnUse"><stop offset="0.0000" stop-color="#00adfa"/><stop offset="0.0385" stop-color="#00adf9"/><stop offset="0.0769" stop-color="#00acf9"/><stop offset="0.1154" stop-color="#00acf9"/><stop offset="0.1538" stop-color="#00acf9"/><stop offset="0.1923" stop-color="#01acf9"/><stop offset="0.2308" stop-color="#01abf9"/><stop offset="0.2692" stop-color="#01aaf9"/><stop offset="0.3077" stop-color="#01a8f9"/><stop offset="0.3462" stop-color="#02a5f9"/><stop offset="0.3846" stop-color="#02a2f9"/><stop offset="0.4231" stop-color="#029ff9"/><stop offset="0.4615" stop-color="#029df9"/><stop offset="0.5000" stop-color="#029afa"/><stop offset="0.5385" stop-color="#0297fb"/><stop offset="0.5769" stop-color="#0294fc"/><stop offset="0.6154" stop-color="#0390fd"/><stop offset="0.6538" stop-color="#058cfc"/><stop offset="0.6923" stop-color="#098cf8"/><stop offset="0.7308" stop-color="#088ff9"/><stop offset="0.7692" stop-color="#0492fa"/><stop offset="0.8077" stop-color="#028ff8"/><stop offset="0.8462" stop-color="#018af4"/><stop offset="0.8846" stop-color="#0184ef"/><stop offset="0.9231" stop-color="#017eea"/><stop offset="0.9615" stop-color="#0178e6"/><stop offset="1.0000" stop-color="#0171e1"/></linearGradient><linearGradient id="q10" x1="-60" x2="1500" y1="0" y2="0" gradientUnits="userSpaceOnUse"><stop offset="0.0000" stop-color="#00aefa"/><stop offset="0.0385" stop-color="#00aefa"/><stop offset="0.0769" stop-color="#00adf9"/><stop offset="0.1154" stop-color="#00adf9"/><stop offset="0.1538" stop-color="#00adf9"/><stop offset="0.1923" stop-color="#01adfa"/><stop offset="0.2308" stop-color="#01acfa"/><stop offset="0.2692" stop-color="#01abfa"/><stop offset="0.3077" stop-color="#01a9fa"/><stop offset="0.3462" stop-color="#01a6fa"/><stop offset="0.3846" stop-color="#02a3f9"/><stop offset="0.4231" stop-color="#029ff9"/><stop offset="0.4615" stop-color="#019dfa"/><stop offset="0.5000" stop-color="#019afb"/><stop offset="0.5385" stop-color="#0197fc"/><stop offset="0.5769" stop-color="#0193fd"/><stop offset="0.6154" stop-color="#028ffe"/><stop offset="0.6538" stop-color="#048cfd"/><stop offset="0.6923" stop-color="#098bf8"/><stop offset="0.7308" stop-color="#0790f9"/><stop offset="0.7692" stop-color="#0392fb"/><stop offset="0.8077" stop-color="#028ef7"/><stop offset="0.8462" stop-color="#0188f3"/><stop offset="0.8846" stop-color="#0182ee"/><stop offset="0.9231" stop-color="#007be9"/><stop offset="0.9615" stop-color="#0075e4"/><stop offset="1.0000" stop-color="#016fdf"/></linearGradient><linearGradient id="q11" x1="-60" x2="1500" y1="0" y2="0" gradientUnits="userSpaceOnUse"><stop offset="0.0000" stop-color="#00affb"/><stop offset="0.0385" stop-color="#00affa"/><stop offset="0.0769" stop-color="#00aefa"/><stop offset="0.1154" stop-color="#00aefa"/><stop offset="0.1538" stop-color="#00aefa"/><stop offset="0.1923" stop-color="#01aefa"/><stop offset="0.2308" stop-color="#01adfa"/><stop offset="0.2692" stop-color="#01acfa"/><stop offset="0.3077" stop-color="#01aafa"/><stop offset="0.3462" stop-color="#01a7fa"/><stop offset="0.3846" stop-color="#01a3fa"/><stop offset="0.4231" stop-color="#01a0fa"/><stop offset="0.4615" stop-color="#019dfa"/><stop offset="0.5000" stop-color="#019afb"/><stop offset="0.5385" stop-color="#0197fc"/><stop offset="0.5769" stop-color="#0193fd"/><stop offset="0.6154" stop-color="#018ffe"/><stop offset="0.6538" stop-color="#038bfd"/><stop offset="0.6923" stop-color="#088af9"/><stop offset="0.7308" stop-color="#0690fa"/><stop offset="0.7692" stop-color="#0291fb"/><stop offset="0.8077" stop-color="#018cf6"/><stop offset="0.8462" stop-color="#0086f1"/><stop offset="0.8846" stop-color="#007fec"/><stop offset="0.9231" stop-color="#0078e6"/><stop offset="0.9615" stop-color="#0072e2"/><stop offset="1.0000" stop-color="#006cdd"/></linearGradient><linearGradient id="q12" x1="-60" x2="1500" y1="0" y2="0" gradientUnits="userSpaceOnUse"><stop offset="0.0000" stop-color="#00b0fb"/><stop offset="0.0385" stop-color="#00b0fb"/><stop offset="0.0769" stop-color="#00affb"/><stop offset="0.1154" stop-color="#00affa"/><stop offset="0.1538" stop-color="#00b0fb"/><stop offset="0.1923" stop-color="#01affb"/><stop offset="0.2308" stop-color="#01affb"/><stop offset="0.2692" stop-color="#01adfb"/><stop offset="0.3077" stop-color="#01abfb"/><stop offset="0.3462" stop-color="#01a8fa"/><stop offset="0.3846" stop-color="#01a4fa"/><stop offset="0.4231" stop-color="#01a1fa"/><stop offset="0.4615" stop-color="#019efa"/><stop offset="0.5000" stop-color="#019afb"/><stop offset="0.5385" stop-color="#0196fc"/><stop offset="0.5769" stop-color="#0192fd"/><stop offset="0.6154" stop-color="#018efe"/><stop offset="0.6538" stop-color="#038bfc"/><stop offset="0.6923" stop-color="#068af9"/><stop offset="0.7308" stop-color="#048efa"/><stop offset="0.7692" stop-color="#018ff9"/><stop offset="0.8077" stop-color="#0089f4"/><stop offset="0.8462" stop-color="#0082ef"/><stop offset="0.8846" stop-color="#007be9"/><stop offset="0.9231" stop-color="#0075e4"/><stop offset="0.9615" stop-color="#006edf"/><stop offset="1.0000" stop-color="#0068da"/></linearGradient><linearGradient id="q13" x1="-60" x2="1500" y1="0" y2="0" gradientUnits="userSpaceOnUse"><stop offset="0.0000" stop-color="#00b1fc"/><stop offset="0.0385" stop-color="#00b1fb"/><stop offset="0.0769" stop-color="#00b1fb"/><stop offset="0.1154" stop-color="#00b1fb"/><stop offset="0.1538" stop-color="#01b1fb"/><stop offset="0.1923" stop-color="#01b1fb"/><stop offset="0.2308" stop-color="#01b0fb"/><stop offset="0.2692" stop-color="#01affb"/><stop offset="0.3077" stop-color="#01acfb"/><stop offset="0.3462" stop-color="#01a9fa"/><stop offset="0.3846" stop-color="#01a6fa"/><stop offset="0.4231" stop-color="#01a2fa"/><stop offset="0.4615" stop-color="#019efa"/><stop offset="0.5000" stop-color="#019bfb"/><stop offset="0.5385" stop-color="#0096fb"/><stop offset="0.5769" stop-color="#0092fc"/><stop offset="0.6154" stop-color="#018efc"/><stop offset="0.6538" stop-color="#038bfb"/><stop offset="0.6923" stop-color="#058af8"/><stop offset="0.7308" stop-color="#038bf8"/><stop offset="0.7692" stop-color="#018af6"/><stop offset="0.8077" stop-color="#0085f1"/><stop offset="0.8462" stop-color="#007eec"/><stop offset="0.8846" stop-color="#0077e6"/><stop offset="0.9231" stop-color="#0071e1"/><stop offset="0.9615" stop-color="#006adc"/><stop offset="1.0000" stop-color="#0065d8"/></linearGradient><linearGradient id="q14" x1="-60" x2="1500" y1="0" y2="0" gradientUnits="userSpaceOnUse"><stop offset="0.0000" stop-color="#00b2fc"/><stop offset="0.0385" stop-color="#00b2fc"/><stop offset="0.0769" stop-color="#00b2fc"/><stop offset="0.1154" stop-color="#01b2fc"/><stop offset="0.1538" stop-color="#01b2fc"/><stop offset="0.1923" stop-color="#01b2fc"/><stop offset="0.2308" stop-color="#01b1fc"/><stop offset="0.2692" stop-color="#01b0fc"/><stop offset="0.3077" stop-color="#01aefb"/><stop offset="0.3462" stop-color="#01abfb"/><stop offset="0.3846" stop-color="#01a7fa"/><stop offset="0.4231" stop-color="#01a3fa"/><stop offset="0.4615" stop-color="#019ffa"/><stop offset="0.5000" stop-color="#019bfa"/><stop offset="0.5385" stop-color="#0097fb"/><stop offset="0.5769" stop-color="#0192fb"/><stop offset="0.6154" stop-color="#018efa"/><stop offset="0.6538" stop-color="#028af9"/><stop offset="0.6923" stop-color="#0488f6"/><stop offset="0.7308" stop-color="#0388f5"/><stop offset="0.7692" stop-color="#0185f2"/><stop offset="0.8077" stop-color="#0080ed"/><stop offset="0.8462" stop-color="#0079e8"/><stop offset="0.8846" stop-color="#0073e3"/><stop offset="0.9231" stop-color="#006cde"/><stop offset="0.9615" stop-color="#0067d9"/><stop offset="1.0000" stop-color="#0061d5"/></linearGradient><linearGradient id="q15" x1="-60" x2="1500" y1="0" y2="0" gradientUnits="userSpaceOnUse"><stop offset="0.0000" stop-color="#00b3fc"/><stop offset="0.0385" stop-color="#00b3fc"/><stop offset="0.0769" stop-color="#00b3fc"/><stop offset="0.1154" stop-color="#01b3fd"/><stop offset="0.1538" stop-color="#01b3fd"/><stop offset="0.1923" stop-color="#01b3fc"/><stop offset="0.2308" stop-color="#01b3fc"/><stop offset="0.2692" stop-color="#01b1fc"/><stop offset="0.3077" stop-color="#01affb"/><stop offset="0.3462" stop-color="#01acfb"/><stop offset="0.3846" stop-color="#01a9fa"/><stop offset="0.4231" stop-color="#01a4fa"/><stop offset="0.4615" stop-color="#01a0f9"/><stop offset="0.5000" stop-color="#019cf9"/><stop offset="0.5385" stop-color="#0097f9"/><stop offset="0.5769" stop-color="#0192f9"/><stop offset="0.6154" stop-color="#018df8"/><stop offset="0.6538" stop-color="#0289f6"/><stop offset="0.6923" stop-color="#0386f3"/><stop offset="0.7308" stop-color="#0283f1"/><stop offset="0.7692" stop-color="#0180ed"/><stop offset="0.8077" stop-color="#007ae9"/><stop offset="0.8462" stop-color="#0074e4"/><stop offset="0.8846" stop-color="#006edf"/><stop offset="0.9231" stop-color="#0068da"/><stop offset="0.9615" stop-color="#0062d6"/><stop offset="1.0000" stop-color="#005dd2"/></linearGradient><linearGradient id="q16" x1="-60" x2="1500" y1="0" y2="0" gradientUnits="userSpaceOnUse"><stop offset="0.0000" stop-color="#00b4fd"/><stop offset="0.0385" stop-color="#00b4fd"/><stop offset="0.0769" stop-color="#01b4fd"/><stop offset="0.1154" stop-color="#01b4fd"/><stop offset="0.1538" stop-color="#01b4fd"/><stop offset="0.1923" stop-color="#01b4fd"/><stop offset="0.2308" stop-color="#01b4fd"/><stop offset="0.2692" stop-color="#01b3fc"/><stop offset="0.3077" stop-color="#01b1fb"/><stop offset="0.3462" stop-color="#01aefb"/><stop offset="0.3846" stop-color="#01aafa"/><stop offset="0.4231" stop-color="#01a6f9"/><stop offset="0.4615" stop-color="#01a1f9"/><stop offset="0.5000" stop-color="#019cf8"/><stop offset="0.5385" stop-color="#0197f8"/><stop offset="0.5769" stop-color="#0192f7"/><stop offset="0.6154" stop-color="#018df6"/><stop offset="0.6538" stop-color="#0287f3"/><stop offset="0.6923" stop-color="#0383f0"/><stop offset="0.7308" stop-color="#027fec"/><stop offset="0.7692" stop-color="#017ae8"/><stop offset="0.8077" stop-color="#0174e4"/><stop offset="0.8462" stop-color="#016edf"/><stop offset="0.8846" stop-color="#0069da"/><stop offset="0.9231" stop-color="#0063d6"/><stop offset="0.9615" stop-color="#005ed2"/><stop offset="1.0000" stop-color="#0159cf"/></linearGradient><linearGradient id="q17" x1="-60" x2="1500" y1="0" y2="0" gradientUnits="userSpaceOnUse"><stop offset="0.0000" stop-color="#00b5fd"/><stop offset="0.0385" stop-color="#01b5fd"/><stop offset="0.0769" stop-color="#01b5fd"/><stop offset="0.1154" stop-color="#01b5fd"/><stop offset="0.1538" stop-color="#01b5fd"/><stop offset="0.1923" stop-color="#01b5fd"/><stop offset="0.2308" stop-color="#01b5fd"/><stop offset="0.2692" stop-color="#01b4fc"/><stop offset="0.3077" stop-color="#01b2fb"/><stop offset="0.3462" stop-color="#01affb"/><stop offset="0.3846" stop-color="#01abfa"/><stop offset="0.4231" stop-color="#01a7f9"/><stop offset="0.4615" stop-color="#01a2f8"/><stop offset="0.5000" stop-color="#019cf7"/><stop offset="0.5385" stop-color="#0197f6"/><stop offset="0.5769" stop-color="#0192f5"/><stop offset="0.6154" stop-color="#018cf3"/><stop offset="0.6538" stop-color="#0286f0"/><stop offset="0.6923" stop-color="#0380ec"/><stop offset="0.7308" stop-color="#027ae8"/><stop offset="0.7692" stop-color="#0274e3"/><stop offset="0.8077" stop-color="#016edf"/><stop offset="0.8462" stop-color="#0169da"/><stop offset="0.8846" stop-color="#0163d6"/><stop offset="0.9231" stop-color="#015ed2"/><stop offset="0.9615" stop-color="#015acf"/><stop offset="1.0000" stop-color="#0155cc"/></linearGradient><linearGradient id="q18" x1="-60" x2="1500" y1="0" y2="0" gradientUnits="userSpaceOnUse"><stop offset="0.0000" stop-color="#00b5fd"/><stop offset="0.0385" stop-color="#01b5fd"/><stop offset="0.0769" stop-color="#01b5fd"/><stop offset="0.1154" stop-color="#02b6fe"/><stop offset="0.1538" stop-color="#02b6fd"/><stop offset="0.1923" stop-color="#02b6fd"/><stop offset="0.2308" stop-color="#02b6fd"/><stop offset="0.2692" stop-color="#01b5fc"/><stop offset="0.3077" stop-color="#01b3fb"/><stop offset="0.3462" stop-color="#01b0fa"/><stop offset="0.3846" stop-color="#01adf9"/><stop offset="0.4231" stop-color="#01a8f8"/><stop offset="0.4615" stop-color="#01a2f7"/><stop offset="0.5000" stop-color="#019df5"/><stop offset="0.5385" stop-color="#0197f4"/><stop offset="0.5769" stop-color="#0191f3"/><stop offset="0.6154" stop-color="#018bf0"/><stop offset="0.6538" stop-color="#0284ed"/><stop offset="0.6923" stop-color="#037de8"/><stop offset="0.7308" stop-color="#0376e3"/><stop offset="0.7692" stop-color="#026fde"/><stop offset="0.8077" stop-color="#0268d9"/><stop offset="0.8462" stop-color="#0163d5"/><stop offset="0.8846" stop-color="#015ed2"/><stop offset="0.9231" stop-color="#015ace"/><stop offset="0.9615" stop-color="#0156cb"/><stop offset="1.0000" stop-color="#0152c8"/></linearGradient><linearGradient id="q19" x1="-60" x2="1500" y1="0" y2="0" gradientUnits="userSpaceOnUse"><stop offset="0.0000" stop-color="#00b6fd"/><stop offset="0.0385" stop-color="#01b6fd"/><stop offset="0.0769" stop-color="#01b6fd"/><stop offset="0.1154" stop-color="#02b6fd"/><stop offset="0.1538" stop-color="#02b6fd"/><stop offset="0.1923" stop-color="#02b7fd"/><stop offset="0.2308" stop-color="#02b7fd"/><stop offset="0.2692" stop-color="#02b6fc"/><stop offset="0.3077" stop-color="#01b4fb"/><stop offset="0.3462" stop-color="#01b1fa"/><stop offset="0.3846" stop-color="#01adf8"/><stop offset="0.4231" stop-color="#01a9f7"/><stop offset="0.4615" stop-color="#01a3f5"/><stop offset="0.5000" stop-color="#019df4"/><stop offset="0.5385" stop-color="#0196f2"/><stop offset="0.5769" stop-color="#0191f0"/><stop offset="0.6154" stop-color="#018aee"/><stop offset="0.6538" stop-color="#0282e9"/><stop offset="0.6923" stop-color="#037ae4"/><stop offset="0.7308" stop-color="#0371de"/><stop offset="0.7692" stop-color="#0369d9"/><stop offset="0.8077" stop-color="#0262d4"/><stop offset="0.8462" stop-color="#025dd0"/><stop offset="0.8846" stop-color="#0259cd"/><stop offset="0.9231" stop-color="#0155ca"/><stop offset="0.9615" stop-color="#0151c8"/><stop offset="1.0000" stop-color="#014ec5"/></linearGradient><linearGradient id="q20" x1="-60" x2="1500" y1="0" y2="0" gradientUnits="userSpaceOnUse"><stop offset="0.0000" stop-color="#01b6fc"/><stop offset="0.0385" stop-color="#01b6fd"/><stop offset="0.0769" stop-color="#01b6fd"/><stop offset="0.1154" stop-color="#02b6fd"/><stop offset="0.1538" stop-color="#02b6fd"/><stop offset="0.1923" stop-color="#02b7fd"/><stop offset="0.2308" stop-color="#02b7fd"/><stop offset="0.2692" stop-color="#02b7fc"/><stop offset="0.3077" stop-color="#02b5fb"/><stop offset="0.3462" stop-color="#01b2f9"/><stop offset="0.3846" stop-color="#01aef8"/><stop offset="0.4231" stop-color="#01a9f6"/><stop offset="0.4615" stop-color="#01a3f4"/><stop offset="0.5000" stop-color="#019cf2"/><stop offset="0.5385" stop-color="#0196f0"/><stop offset="0.5769" stop-color="#0190ee"/><stop offset="0.6154" stop-color="#018aeb"/><stop offset="0.6538" stop-color="#0281e6"/><stop offset="0.6923" stop-color="#0377e0"/><stop offset="0.7308" stop-color="#036dda"/><stop offset="0.7692" stop-color="#0364d4"/><stop offset="0.8077" stop-color="#035dcf"/><stop offset="0.8462" stop-color="#0258cc"/><stop offset="0.8846" stop-color="#0254c9"/><stop offset="0.9231" stop-color="#0251c7"/><stop offset="0.9615" stop-color="#014ec4"/><stop offset="1.0000" stop-color="#014ac2"/></linearGradient><linearGradient id="q21" x1="-60" x2="1500" y1="0" y2="0" gradientUnits="userSpaceOnUse"><stop offset="0.0000" stop-color="#01b6fc"/><stop offset="0.0385" stop-color="#01b6fc"/><stop offset="0.0769" stop-color="#01b6fc"/><stop offset="0.1154" stop-color="#02b5fc"/><stop offset="0.1538" stop-color="#02b6fc"/><stop offset="0.1923" stop-color="#02b7fc"/><stop offset="0.2308" stop-color="#02b8fc"/><stop offset="0.2692" stop-color="#02b7fb"/><stop offset="0.3077" stop-color="#02b5fa"/><stop offset="0.3462" stop-color="#02b2f8"/><stop offset="0.3846" stop-color="#01aff7"/><stop offset="0.4231" stop-color="#01aaf5"/><stop offset="0.4615" stop-color="#01a3f2"/><stop offset="0.5000" stop-color="#019bf0"/><stop offset="0.5385" stop-color="#0195ed"/><stop offset="0.5769" stop-color="#018feb"/><stop offset="0.6154" stop-color="#0189e8"/><stop offset="0.6538" stop-color="#027fe3"/><stop offset="0.6923" stop-color="#0374dd"/><stop offset="0.7308" stop-color="#046ad6"/><stop offset="0.7692" stop-color="#0360d0"/><stop offset="0.8077" stop-color="#0359cb"/><stop offset="0.8462" stop-color="#0354c7"/><stop offset="0.8846" stop-color="#0250c5"/><stop offset="0.9231" stop-color="#024dc3"/><stop offset="0.9615" stop-color="#024ac1"/><stop offset="1.0000" stop-color="#0247bf"/></linearGradient><linearGradient id="q22" x1="-60" x2="1500" y1="0" y2="0" gradientUnits="userSpaceOnUse"><stop offset="0.0000" stop-color="#01b6fc"/><stop offset="0.0385" stop-color="#01b6fc"/><stop offset="0.0769" stop-color="#01b5fc"/><stop offset="0.1154" stop-color="#02b5fc"/><stop offset="0.1538" stop-color="#02b5fb"/><stop offset="0.1923" stop-color="#02b6fb"/><stop offset="0.2308" stop-color="#01b7fb"/><stop offset="0.2692" stop-color="#01b7fa"/><stop offset="0.3077" stop-color="#02b5f9"/><stop offset="0.3462" stop-color="#02b2f7"/><stop offset="0.3846" stop-color="#02aef5"/><stop offset="0.4231" stop-color="#02a9f3"/><stop offset="0.4615" stop-color="#01a2f1"/><stop offset="0.5000" stop-color="#019aee"/><stop offset="0.5385" stop-color="#0193eb"/><stop offset="0.5769" stop-color="#018de9"/><stop offset="0.6154" stop-color="#0188e6"/><stop offset="0.6538" stop-color="#027ee1"/><stop offset="0.6923" stop-color="#0372da"/><stop offset="0.7308" stop-color="#0467d3"/><stop offset="0.7692" stop-color="#045ecc"/><stop offset="0.8077" stop-color="#0455c7"/><stop offset="0.8462" stop-color="#0350c4"/><stop offset="0.8846" stop-color="#034dc2"/><stop offset="0.9231" stop-color="#024ac0"/><stop offset="0.9615" stop-color="#0247be"/><stop offset="1.0000" stop-color="#0244bc"/></linearGradient><linearGradient id="q23" x1="-60" x2="1500" y1="0" y2="0" gradientUnits="userSpaceOnUse"><stop offset="0.0000" stop-color="#01b6fb"/><stop offset="0.0385" stop-color="#01b6fb"/><stop offset="0.0769" stop-color="#01b5fb"/><stop offset="0.1154" stop-color="#02b4fb"/><stop offset="0.1538" stop-color="#02b4fa"/><stop offset="0.1923" stop-color="#02b5fa"/><stop offset="0.2308" stop-color="#01b7fa"/><stop offset="0.2692" stop-color="#01b6f9"/><stop offset="0.3077" stop-color="#02b4f8"/><stop offset="0.3462" stop-color="#02b2f6"/><stop offset="0.3846" stop-color="#02aef4"/><stop offset="0.4231" stop-color="#02a9f2"/><stop offset="0.4615" stop-color="#01a1ef"/><stop offset="0.5000" stop-color="#0199ec"/><stop offset="0.5385" stop-color="#0191e8"/><stop offset="0.5769" stop-color="#018ce6"/><stop offset="0.6154" stop-color="#0286e3"/><stop offset="0.6538" stop-color="#027cde"/><stop offset="0.6923" stop-color="#0371d7"/><stop offset="0.7308" stop-color="#0466d0"/><stop offset="0.7692" stop-color="#045cca"/><stop offset="0.8077" stop-color="#0453c5"/><stop offset="0.8462" stop-color="#034ec1"/><stop offset="0.8846" stop-color="#034abf"/><stop offset="0.9231" stop-color="#0347bd"/><stop offset="0.9615" stop-color="#0244bc"/><stop offset="1.0000" stop-color="#0241ba"/></linearGradient><linearGradient id="q24" x1="-60" x2="1500" y1="0" y2="0" gradientUnits="userSpaceOnUse"><stop offset="0.0000" stop-color="#01b6fb"/><stop offset="0.0385" stop-color="#01b6fa"/><stop offset="0.0769" stop-color="#01b5fa"/><stop offset="0.1154" stop-color="#02b4fa"/><stop offset="0.1538" stop-color="#02b3f9"/><stop offset="0.1923" stop-color="#01b4f9"/><stop offset="0.2308" stop-color="#01b5f9"/><stop offset="0.2692" stop-color="#01b5f8"/><stop offset="0.3077" stop-color="#02b4f7"/><stop offset="0.3462" stop-color="#02b1f5"/><stop offset="0.3846" stop-color="#02adf3"/><stop offset="0.4231" stop-color="#02a7f0"/><stop offset="0.4615" stop-color="#02a0ed"/><stop offset="0.5000" stop-color="#0298ea"/><stop offset="0.5385" stop-color="#0290e6"/><stop offset="0.5769" stop-color="#018ae4"/><stop offset="0.6154" stop-color="#0284e1"/><stop offset="0.6538" stop-color="#027bdc"/><stop offset="0.6923" stop-color="#0370d5"/><stop offset="0.7308" stop-color="#0465cf"/><stop offset="0.7692" stop-color="#045bc8"/><stop offset="0.8077" stop-color="#0452c3"/><stop offset="0.8462" stop-color="#044cbf"/><stop offset="0.8846" stop-color="#0348bd"/><stop offset="0.9231" stop-color="#0345bb"/><stop offset="0.9615" stop-color="#0241b9"/><stop offset="1.0000" stop-color="#023fb8"/></linearGradient><linearGradient id="q25" x1="-60" x2="1500" y1="0" y2="0" gradientUnits="userSpaceOnUse"><stop offset="0.0000" stop-color="#01b6fa"/><stop offset="0.0385" stop-color="#01b6fa"/><stop offset="0.0769" stop-color="#01b5f9"/><stop offset="0.1154" stop-color="#02b4f9"/><stop offset="0.1538" stop-color="#02b3f8"/><stop offset="0.1923" stop-color="#01b4f8"/><stop offset="0.2308" stop-color="#01b4f8"/><stop offset="0.2692" stop-color="#01b4f7"/><stop offset="0.3077" stop-color="#02b3f5"/><stop offset="0.3462" stop-color="#02b0f3"/><stop offset="0.3846" stop-color="#02acf1"/><stop offset="0.4231" stop-color="#02a6ef"/><stop offset="0.4615" stop-color="#029fec"/><stop offset="0.5000" stop-color="#0297e8"/><stop offset="0.5385" stop-color="#028ee5"/><stop offset="0.5769" stop-color="#0188e2"/><stop offset="0.6154" stop-color="#0281df"/><stop offset="0.6538" stop-color="#0279da"/><stop offset="0.6923" stop-color="#036fd4"/><stop offset="0.7308" stop-color="#0465cd"/><stop offset="0.7692" stop-color="#045bc7"/><stop offset="0.8077" stop-color="#0452c1"/><stop offset="0.8462" stop-color="#044bbe"/><stop offset="0.8846" stop-color="#0346bb"/><stop offset="0.9231" stop-color="#0343b9"/><stop offset="0.9615" stop-color="#033fb7"/><stop offset="1.0000" stop-color="#023cb5"/></linearGradient><linearGradient id="q26" x1="-60" x2="1500" y1="0" y2="0" gradientUnits="userSpaceOnUse"><stop offset="0.0000" stop-color="#01b6f9"/><stop offset="0.0385" stop-color="#01b5f9"/><stop offset="0.0769" stop-color="#01b5f8"/><stop offset="0.1154" stop-color="#02b4f8"/><stop offset="0.1538" stop-color="#02b3f7"/><stop offset="0.1923" stop-color="#01b3f7"/><stop offset="0.2308" stop-color="#01b3f6"/><stop offset="0.2692" stop-color="#01b3f5"/><stop offset="0.3077" stop-color="#02b1f4"/><stop offset="0.3462" stop-color="#02aef2"/><stop offset="0.3846" stop-color="#02aaf0"/><stop offset="0.4231" stop-color="#02a5ed"/><stop offset="0.4615" stop-color="#029eea"/><stop offset="0.5000" stop-color="#0296e7"/><stop offset="0.5385" stop-color="#018de3"/><stop offset="0.5769" stop-color="#0187e0"/><stop offset="0.6154" stop-color="#0280dd"/><stop offset="0.6538" stop-color="#0277d8"/><stop offset="0.6923" stop-color="#036ed2"/><stop offset="0.7308" stop-color="#0365cc"/><stop offset="0.7692" stop-color="#045bc6"/><stop offset="0.8077" stop-color="#0452c0"/><stop offset="0.8462" stop-color="#044bbc"/><stop offset="0.8846" stop-color="#0345b9"/><stop offset="0.9231" stop-color="#0341b7"/><stop offset="0.9615" stop-color="#033eb5"/><stop offset="1.0000" stop-color="#033ab3"/></linearGradient><linearGradient id="q27" x1="-60" x2="1500" y1="0" y2="0" gradientUnits="userSpaceOnUse"><stop offset="0.0000" stop-color="#01b6f8"/><stop offset="0.0385" stop-color="#01b5f8"/><stop offset="0.0769" stop-color="#01b4f7"/><stop offset="0.1154" stop-color="#02b3f7"/><stop offset="0.1538" stop-color="#02b3f6"/><stop offset="0.1923" stop-color="#01b2f6"/><stop offset="0.2308" stop-color="#01b2f5"/><stop offset="0.2692" stop-color="#01b2f4"/><stop offset="0.3077" stop-color="#02b0f2"/><stop offset="0.3462" stop-color="#02adf1"/><stop offset="0.3846" stop-color="#02a9ef"/><stop offset="0.4231" stop-color="#02a3ec"/><stop offset="0.4615" stop-color="#029ce9"/><stop offset="0.5000" stop-color="#0194e5"/><stop offset="0.5385" stop-color="#018de2"/><stop offset="0.5769" stop-color="#0185df"/><stop offset="0.6154" stop-color="#017edb"/><stop offset="0.6538" stop-color="#0276d7"/><stop offset="0.6923" stop-color="#036dd1"/><stop offset="0.7308" stop-color="#0364cb"/><stop offset="0.7692" stop-color="#045bc5"/><stop offset="0.8077" stop-color="#0452c0"/><stop offset="0.8462" stop-color="#044abb"/><stop offset="0.8846" stop-color="#0345b8"/><stop offset="0.9231" stop-color="#0340b6"/><stop offset="0.9615" stop-color="#033cb3"/><stop offset="1.0000" stop-color="#0339b1"/></linearGradient><linearGradient id="q28" x1="-60" x2="1500" y1="0" y2="0" gradientUnits="userSpaceOnUse"><stop offset="0.0000" stop-color="#01b6f8"/><stop offset="0.0385" stop-color="#01b5f7"/><stop offset="0.0769" stop-color="#01b4f6"/><stop offset="0.1154" stop-color="#02b3f6"/><stop offset="0.1538" stop-color="#02b2f5"/><stop offset="0.1923" stop-color="#02b2f4"/><stop offset="0.2308" stop-color="#01b1f3"/><stop offset="0.2692" stop-color="#01b0f2"/><stop offset="0.3077" stop-color="#02aff1"/><stop offset="0.3462" stop-color="#02abef"/><stop offset="0.3846" stop-color="#02a7ed"/><stop offset="0.4231" stop-color="#02a2eb"/><stop offset="0.4615" stop-color="#029be8"/><stop offset="0.5000" stop-color="#0193e4"/><stop offset="0.5385" stop-color="#018ce1"/><stop offset="0.5769" stop-color="#0184dd"/><stop offset="0.6154" stop-color="#017dda"/><stop offset="0.6538" stop-color="#0275d5"/><stop offset="0.6923" stop-color="#026cd0"/><stop offset="0.7308" stop-color="#0364ca"/><stop offset="0.7692" stop-color="#035ac4"/><stop offset="0.8077" stop-color="#0451bf"/><stop offset="0.8462" stop-color="#044aba"/><stop offset="0.8846" stop-color="#0344b7"/><stop offset="0.9231" stop-color="#033fb4"/><stop offset="0.9615" stop-color="#033bb2"/><stop offset="1.0000" stop-color="#0337b0"/></linearGradient><linearGradient id="q29" x1="-60" x2="1500" y1="0" y2="0" gradientUnits="userSpaceOnUse"><stop offset="0.0000" stop-color="#01b6f7"/><stop offset="0.0385" stop-color="#01b5f6"/><stop offset="0.0769" stop-color="#01b4f5"/><stop offset="0.1154" stop-color="#02b3f5"/><stop offset="0.1538" stop-color="#02b2f4"/><stop offset="0.1923" stop-color="#02b1f3"/><stop offset="0.2308" stop-color="#01b0f2"/><stop offset="0.2692" stop-color="#01aff1"/><stop offset="0.3077" stop-color="#02adef"/><stop offset="0.3462" stop-color="#02aaee"/><stop offset="0.3846" stop-color="#02a6ec"/><stop offset="0.4231" stop-color="#02a0e9"/><stop offset="0.4615" stop-color="#019ae6"/><stop offset="0.5000" stop-color="#0192e3"/><stop offset="0.5385" stop-color="#018adf"/><stop offset="0.5769" stop-color="#0183dc"/><stop offset="0.6154" stop-color="#017bd8"/><stop offset="0.6538" stop-color="#0274d4"/><stop offset="0.6923" stop-color="#026bcf"/><stop offset="0.7308" stop-color="#0363c9"/><stop offset="0.7692" stop-color="#035ac3"/><stop offset="0.8077" stop-color="#0451be"/><stop offset="0.8462" stop-color="#044ab9"/><stop offset="0.8846" stop-color="#0343b6"/><stop offset="0.9231" stop-color="#033eb3"/><stop offset="0.9615" stop-color="#033ab0"/><stop offset="1.0000" stop-color="#0336ae"/></linearGradient><linearGradient id="q30" x1="-60" x2="1500" y1="0" y2="0" gradientUnits="userSpaceOnUse"><stop offset="0.0000" stop-color="#01b6f6"/><stop offset="0.0385" stop-color="#01b5f5"/><stop offset="0.0769" stop-color="#01b4f4"/><stop offset="0.1154" stop-color="#02b3f4"/><stop offset="0.1538" stop-color="#02b1f3"/><stop offset="0.1923" stop-color="#02b0f2"/><stop offset="0.2308" stop-color="#02aff1"/><stop offset="0.2692" stop-color="#01aeef"/><stop offset="0.3077" stop-color="#02abee"/><stop offset="0.3462" stop-color="#02a8ec"/><stop offset="0.3846" stop-color="#02a4ea"/><stop offset="0.4231" stop-color="#019fe8"/><stop offset="0.4615" stop-color="#0198e5"/><stop offset="0.5000" stop-color="#0191e1"/><stop offset="0.5385" stop-color="#0189de"/><stop offset="0.5769" stop-color="#0182db"/><stop offset="0.6154" stop-color="#017ad7"/><stop offset="0.6538" stop-color="#0272d2"/><stop offset="0.6923" stop-color="#026acd"/><stop offset="0.7308" stop-color="#0362c8"/><stop offset="0.7692" stop-color="#0359c2"/><stop offset="0.8077" stop-color="#0351bd"/><stop offset="0.8462" stop-color="#0349b9"/><stop offset="0.8846" stop-color="#0343b5"/><stop offset="0.9231" stop-color="#033db2"/><stop offset="0.9615" stop-color="#0339af"/><stop offset="1.0000" stop-color="#0335ad"/></linearGradient><linearGradient id="q31" x1="-60" x2="1500" y1="0" y2="0" gradientUnits="userSpaceOnUse"><stop offset="0.0000" stop-color="#01b5f5"/><stop offset="0.0385" stop-color="#01b4f4"/><stop offset="0.0769" stop-color="#01b3f3"/><stop offset="0.1154" stop-color="#01b2f3"/><stop offset="0.1538" stop-color="#02b1f2"/><stop offset="0.1923" stop-color="#02b0f1"/><stop offset="0.2308" stop-color="#02aeef"/><stop offset="0.2692" stop-color="#02acee"/><stop offset="0.3077" stop-color="#01aaec"/><stop offset="0.3462" stop-color="#01a7eb"/><stop offset="0.3846" stop-color="#01a2e9"/><stop offset="0.4231" stop-color="#019de6"/><stop offset="0.4615" stop-color="#0197e3"/><stop offset="0.5000" stop-color="#018fe0"/><stop offset="0.5385" stop-color="#0188dd"/><stop offset="0.5769" stop-color="#0181d9"/><stop offset="0.6154" stop-color="#0179d5"/><stop offset="0.6538" stop-color="#0271d1"/><stop offset="0.6923" stop-color="#0269cc"/><stop offset="0.7308" stop-color="#0361c6"/><stop offset="0.7692" stop-color="#0358c1"/><stop offset="0.8077" stop-color="#0350bc"/><stop offset="0.8462" stop-color="#0349b8"/><stop offset="0.8846" stop-color="#0342b4"/><stop offset="0.9231" stop-color="#033db1"/><stop offset="0.9615" stop-color="#0338ae"/><stop offset="1.0000" stop-color="#0334ab"/></linearGradient><filter id="blur" x="-5%" y="-5%" width="110%" height="110%"><feGaussianBlur stdDeviation="0 10"/></filter><clipPath id="cW"><polygon points="61,0 1440,0 1440,900 1155,900 1155,318"/></clipPath><clipPath id="cR"><polygon points="-10,-10 61,0 1155,318 1155,900 -10,900"/></clipPath></defs><g clip-path="url(#cR)"><g filter="url(#blur)"><rect x="-60" y="-30" width="1560" height="31" fill="url(#q0)"/><rect x="-60" y="0" width="1560" height="31" fill="url(#q1)"/><rect x="-60" y="30" width="1560" height="31" fill="url(#q2)"/><rect x="-60" y="60" width="1560" height="31" fill="url(#q3)"/><rect x="-60" y="90" width="1560" height="31" fill="url(#q4)"/><rect x="-60" y="120" width="1560" height="31" fill="url(#q5)"/><rect x="-60" y="150" width="1560" height="31" fill="url(#q6)"/><rect x="-60" y="180" width="1560" height="31" fill="url(#q7)"/><rect x="-60" y="210" width="1560" height="31" fill="url(#q8)"/><rect x="-60" y="240" width="1560" height="31" fill="url(#q9)"/><rect x="-60" y="270" width="1560" height="31" fill="url(#q10)"/><rect x="-60" y="300" width="1560" height="31" fill="url(#q11)"/><rect x="-60" y="330" width="1560" height="31" fill="url(#q12)"/><rect x="-60" y="360" width="1560" height="31" fill="url(#q13)"/><rect x="-60" y="390" width="1560" height="31" fill="url(#q14)"/><rect x="-60" y="420" width="1560" height="31" fill="url(#q15)"/><rect x="-60" y="450" width="1560" height="31" fill="url(#q16)"/><rect x="-60" y="480" width="1560" height="31" fill="url(#q17)"/><rect x="-60" y="510" width="1560" height="31" fill="url(#q18)"/><rect x="-60" y="540" width="1560" height="31" fill="url(#q19)"/><rect x="-60" y="570" width="1560" height="31" fill="url(#q20)"/><rect x="-60" y="600" width="1560" height="31" fill="url(#q21)"/><rect x="-60" y="630" width="1560" height="31" fill="url(#q22)"/><rect x="-60" y="660" width="1560" height="31" fill="url(#q23)"/><rect x="-60" y="690" width="1560" height="31" fill="url(#q24)"/><rect x="-60" y="720" width="1560" height="31" fill="url(#q25)"/><rect x="-60" y="750" width="1560" height="31" fill="url(#q26)"/><rect x="-60" y="780" width="1560" height="31" fill="url(#q27)"/><rect x="-60" y="810" width="1560" height="31" fill="url(#q28)"/><rect x="-60" y="840" width="1560" height="31" fill="url(#q29)"/><rect x="-60" y="870" width="1560" height="31" fill="url(#q30)"/><rect x="-60" y="900" width="1560" height="31" fill="url(#q31)"/></g></g><g clip-path="url(#cW)"><g filter="url(#blur)"><rect x="-60" y="-30" width="1560" height="31" fill="url(#w0)"/><rect x="-60" y="0" width="1560" height="31" fill="url(#w1)"/><rect x="-60" y="30" width="1560" height="31" fill="url(#w2)"/><rect x="-60" y="60" width="1560" height="31" fill="url(#w3)"/><rect x="-60" y="90" width="1560" height="31" fill="url(#w4)"/><rect x="-60" y="120" width="1560" height="31" fill="url(#w5)"/><rect x="-60" y="150" width="1560" height="31" fill="url(#w6)"/><rect x="-60" y="180" width="1560" height="31" fill="url(#w7)"/><rect x="-60" y="210" width="1560" height="31" fill="url(#w8)"/><rect x="-60" y="240" width="1560" height="31" fill="url(#w9)"/><rect x="-60" y="270" width="1560" height="31" fill="url(#w10)"/><rect x="-60" y="300" width="1560" height="31" fill="url(#w11)"/><rect x="-60" y="330" width="1560" height="31" fill="url(#w12)"/><rect x="-60" y="360" width="1560" height="31" fill="url(#w13)"/><rect x="-60" y="390" width="1560" height="31" fill="url(#w14)"/><rect x="-60" y="420" width="1560" height="31" fill="url(#w15)"/><rect x="-60" y="450" width="1560" height="31" fill="url(#w16)"/><rect x="-60" y="480" width="1560" height="31" fill="url(#w17)"/><rect x="-60" y="510" width="1560" height="31" fill="url(#w18)"/><rect x="-60" y="540" width="1560" height="31" fill="url(#w19)"/><rect x="-60" y="570" width="1560" height="31" fill="url(#w20)"/><rect x="-60" y="600" width="1560" height="31" fill="url(#w21)"/><rect x="-60" y="630" width="1560" height="31" fill="url(#w22)"/><rect x="-60" y="660" width="1560" height="31" fill="url(#w23)"/><rect x="-60" y="690" width="1560" height="31" fill="url(#w24)"/><rect x="-60" y="720" width="1560" height="31" fill="url(#w25)"/><rect x="-60" y="750" width="1560" height="31" fill="url(#w26)"/><rect x="-60" y="780" width="1560" height="31" fill="url(#w27)"/><rect x="-60" y="810" width="1560" height="31" fill="url(#w28)"/><rect x="-60" y="840" width="1560" height="31" fill="url(#w29)"/><rect x="-60" y="870" width="1560" height="31" fill="url(#w30)"/><rect x="-60" y="900" width="1560" height="31" fill="url(#w31)"/></g></g></svg>
<svg class="a" style="left:0;top:0" width="1440" height="900" viewBox="0 0 1440 900">
<defs>
<linearGradient id="gPane" x1="0" y1="0" x2="1" y2="1">
<stop offset="0" stop-color="#1c9af4"/>
<stop offset="1" stop-color="#26acfe"/>
</linearGradient>
</defs>
<line x1="61" y1="0" x2="1155" y2="318" stroke="#7fd4ff" stroke-opacity="0.22" stroke-width="1.2"/>
<line x1="450" y1="792" x2="1155" y2="579" stroke="#7fd4ff" stroke-opacity="0.2" stroke-width="1.5"/>
<polygon points="1011,337 1155,318 1155,448 1011,448" fill="url(#gPane)"/>
<polygon points="880,355.6 1006,339 1006,448 880,448" fill="url(#gPane)"/>
<polyline points="1011,448 1011,337 1155,318 1155,448" fill="none" stroke="#9fe8ff" stroke-opacity="0.5" stroke-width="1"/>
<polyline points="1155,318 1155,448" fill="none" stroke="#aef0ff" stroke-opacity="0.7" stroke-width="1.5"/>
</svg>

<!-- recycle bin -->
<svg class="a" style="left:16px;top:6px" width="42" height="48" viewBox="0 0 42 48">
<defs><linearGradient id="rbl" x1="0" y1="0" x2="1" y2="1"><stop offset="0" stop-color="#e6eaee"/><stop offset="1" stop-color="#f4f5f6"/></linearGradient>
<linearGradient id="rbr" x1="0" y1="0" x2="1" y2="0"><stop offset="0" stop-color="#f2f3f4"/><stop offset="1" stop-color="#d6dade"/></linearGradient></defs>
<path d="M2 9L24 15L24 45L6 40Z" fill="url(#rbl)"/>
<path d="M24 15L39 10L36 42L24 45Z" fill="url(#rbr)"/>
<path d="M2 9L17 4L39 10L24 15Z" fill="#fafafa"/>
<path d="M8 8C10 4 14 3 17 5C19 2 24 3 26 6C29 5 33 7 33 10L24 13Z" fill="#ffffff"/>
<path d="M2 9L24 15L39 10" fill="none" stroke="#cfe8f8" stroke-width="1"/>
<path d="M2 9L6 40L24 45L36 42L39 10" fill="none" stroke="#bcd8ec" stroke-width="0.8"/>
<g fill="#1f74d0">
<path d="M9 22C11 19 15 19 17 21L18.5 19.5L19 25L14 24.5L15.5 23C14 22 12 22.5 11.5 24Z"/>
<path d="M20 26C21.5 29 20 32 17.5 33L18.5 35L13.5 34L15.5 30L16.5 31.5C18 30.5 18.5 29 18 27.5Z"/>
<path d="M12 33C9 32.5 7.5 29.5 8 26.5L6 26L9.5 22.5L11.5 27L10 27C9.8 29 10.8 30.5 12.5 31Z"/>
</g>
</svg>
<div class="dlbl" style="left:8px;top:59px;width:58px">Кошик</div>
<!-- sidorov doc -->
<svg class="a" style="left:16px;top:110px" width="40" height="49" viewBox="0 0 40 49">
<path d="M0.5 0.5H28L39.5 12V48.5H0.5Z" fill="#300a92" stroke="#0a0040" stroke-width="1"/>
<path d="M28 1L39 12H28Z" fill="#9c9cf4" stroke="#0a0040" stroke-width="1"/>
<g fill="none" stroke="#fbf6ff" stroke-width="2.6" stroke-linejoin="round">
<path d="M3.5 3.5L25 26.5Q25.5 30 21.5 31.5L2 8.5"/>
<path d="M2 19.5L19.5 35.5Q19 39.5 15.5 40.5L2 27"/>
</g>
<path d="M28.5 25.5L36.5 36.5L25.5 45.5L19.5 37.5Z" fill="#f7aa10"/>
<path d="M28.5 25.5L31 29L23 40L19.5 37.5Z" fill="#fbbc2a"/>
</svg>
<div class="dlbl" style="left:0px;top:162px;width:74px;letter-spacing:-0.3px">sidorov_tra...</div>
<!-- START folder -->
<svg class="a" style="left:170px;top:628px" width="30" height="44" viewBox="0 0 30 44">
<defs><linearGradient id="fdb" x1="0" y1="0" x2="0" y2="1"><stop offset="0" stop-color="#f4d27a"/><stop offset="1" stop-color="#ecc257"/></linearGradient></defs>
<path d="M1 2 H28 V24 L28 26 L29 28 V36 H9 Z" fill="url(#fdb)"/>
<path d="M1 2 L9 8 V44 L1 38 Z" fill="#fde8a6"/>
<path d="M9 8 V44" stroke="#e8c060" stroke-width="0.8"/>
</svg>
<div class="dlbl" style="left:161px;top:677px;width:50px;letter-spacing:-0.3px">START</div>
<!-- FORUM folder -->
<svg class="a" style="left:1370px;top:731px" width="34" height="44" viewBox="0 0 34 44">
<path d="M2 2 H25 V4 H30 V40 H10 Z" fill="#f0ca64"/>
<rect x="20" y="7" width="8" height="32" fill="#f6f6f6"/>
<path d="M21 10h6M21 13h6M21 16h6M21 19h6M21 28h6M21 31h6M21 34h6" stroke="#b8c4d0" stroke-width="0.8"/>
<rect x="21" y="20" width="6" height="6" fill="#3a8ad0"/>
<path d="M28 26 L32 28 V39 H28 Z" fill="#f2d070"/>
<path d="M2 2 L11 8 V42 L2 37 Z" fill="#fbe29a"/>
<path d="M11 8 L18 10 V41 L11 42 Z" fill="#f5d680"/>
</svg>
<div class="dlbl" style="left:1361px;top:780px;width:52px">FORUM</div>

<!-- ===== WINDOW 1 LOG ===== -->
<div class="win" style="left:251px;top:0;width:644px;height:314px;background:#f2faff;border-color:#3c566b;box-shadow:1px 0 0 #4c6478,2px 0 0 rgba(40,70,100,0.5)"></div>
<div class="a" style="left:252px;top:1px;width:642px;height:30px;background:#fff"></div>
<div class="a" style="left:252px;top:31px;width:642px;height:1px;background:#7e8286"></div><div class="a" style="left:252px;top:32px;width:642px;height:1px;background:#fbfeff"></div>
<svg class="a" style="left:259px;top:7px" width="16" height="16"><use href="#n1mm"/></svg>
<div class="a ttl" id="w1t" style="left:280px;top:9px;color:#9b9b9b;letter-spacing:-0.45px">30.04.2024 20:37:42Z&nbsp; ARI DX INT - UW1WU.s3db</div>
<div class="a" style="left:776px;top:15px;width:10px;height:1px;background:#9b9b9b"></div>
<div class="a" style="left:821px;top:10px;width:10px;height:10px;border:1px solid #9b9b9b"></div>
<svg class="a" style="left:867px;top:10px" width="11" height="11"><path d="M0.5 0.5L10.5 10.5M10.5 0.5L0.5 10.5" stroke="#9b9b9b" stroke-width="1"/></svg>
<!-- grid pane 1 -->
<div class="vl" style="left:453px;top:60px;height:93px"></div>
<div class="vl" style="left:553px;top:60px;height:93px"></div>
<div class="vl" style="left:643px;top:60px;height:93px"></div>
<div class="vl" style="left:693px;top:60px;height:93px"></div>
<div class="vl" style="left:743px;top:60px;height:93px"></div>
<div class="vl" style="left:793px;top:60px;height:93px"></div>
<div class="vl" style="left:843px;top:60px;height:93px"></div>
<div class="hl" style="left:252px;top:83px;width:641px"></div>
<div class="hl" style="left:252px;top:106px;width:641px"></div>
<div class="hl" style="left:252px;top:130px;width:641px"></div>
<div class="hl" style="left:252px;top:152px;width:641px"></div>
<div class="a mono" id="w1h" style="left:260px;top:38px;font-size:15px;line-height:18px;color:#000">DD-MM HH:MM</div>
<div class="a mono" style="left:460px;top:38px;font-size:15px;line-height:18px">Call</div>
<div class="a mono" style="left:600px;top:38px;font-size:15px;line-height:18px">Freq</div>
<div class="a mono" style="left:650px;top:38px;font-size:15px;line-height:18px">M...</div>
<div class="a mono" style="left:704px;top:38px;font-size:15px;line-height:18px">Snt</div>
<div class="a mono" style="left:749px;top:38px;font-size:15px;line-height:18px">S...</div>
<div class="a mono" style="left:804px;top:38px;font-size:15px;line-height:18px">Rcv</div>
<div class="a mono" style="left:850px;top:38px;font-size:15px;line-height:18px">Pfx</div>
<!-- vscroll buttons -->
<div class="a" style="left:879px;top:33px;width:14px;height:22px;background:#c2c2c2"></div>
<div class="a" style="left:880px;top:34px;width:12px;height:9px;background:#f0f0f0"></div>
<div class="a" style="left:880px;top:45px;width:12px;height:9px;background:#f0f0f0"></div>
<svg class="a" style="left:880px;top:34px" width="12" height="20"><path d="M3 6.5h6L6 3.5Z M3 13.5h6L6 16.5Z" fill="#000"/></svg>
<!-- notification -->
<div class="a" style="left:287px;top:76px;width:573px;height:61px;background:#fde8cb;border:2px solid #8f8f8f;border-radius:9px"></div>
<div class="a" id="w1n" style="left:287px;top:79px;width:573px;text-align:center;font-size:16px;line-height:18.3px;color:#6b6b6b;letter-spacing:0.1px">Log: ARIDX<br>in db: C:\Users\uw1wu\Documents\N1MM Logger+\Databases\UW1WU.s3db<br>has no QSOs yet.</div>
<!-- scrollbar 1 -->
<div class="sbar" style="left:252px;top:153px;width:642px"></div>
<div class="thumb" style="left:270px;top:154px;width:496px;height:15px"></div>
<svg class="a" style="left:256px;top:156px" width="10" height="10"><path d="M6.5 1.5L3 5L6.5 8.5" fill="none" stroke="#555" stroke-width="1.8"/></svg>
<svg class="a" style="left:879px;top:156px" width="10" height="10"><path d="M3.5 1.5L7 5L3.5 8.5" fill="none" stroke="#555" stroke-width="1.8"/></svg>
<!-- splitter -->
<div class="a" style="left:252px;top:170px;width:642px;height:1px;background:#f0f0f0"></div><div class="a" style="left:252px;top:171px;width:642px;height:4px;background:#d3e3f3;border-top:1px solid #5b6e7e;border-bottom:1px solid #5b6e7e"></div>
<!-- grid pane 2 -->
<div class="vl" style="left:453px;top:175px;height:120px"></div>
<div class="vl" style="left:553px;top:175px;height:120px"></div>
<div class="vl" style="left:643px;top:175px;height:120px"></div>
<div class="vl" style="left:693px;top:175px;height:120px"></div>
<div class="vl" style="left:743px;top:175px;height:120px"></div>
<div class="vl" style="left:793px;top:175px;height:120px"></div>
<div class="vl" style="left:843px;top:175px;height:120px"></div>
<div class="hl" style="left:252px;top:198px;width:641px"></div>
<div class="hl" style="left:252px;top:221px;width:641px"></div>
<div class="hl" style="left:252px;top:244px;width:641px"></div>
<div class="hl" style="left:252px;top:267px;width:641px"></div>
<div class="hl" style="left:252px;top:290px;width:641px"></div>
<!-- scrollbar 2 -->
<div class="sbar" style="left:252px;top:295px;width:642px"></div>
<div class="thumb" style="left:270px;top:296px;width:496px;height:15px"></div>
<svg class="a" style="left:256px;top:298px" width="10" height="10"><path d="M6.5 1.5L3 5L6.5 8.5" fill="none" stroke="#555" stroke-width="1.8"/></svg>
<svg class="a" style="left:879px;top:298px" width="10" height="10"><path d="M3.5 1.5L7 5L3.5 8.5" fill="none" stroke="#555" stroke-width="1.8"/></svg>
<div class="a" style="left:251px;top:311px;width:645px;height:3px;background:#f0f0f0;border-bottom:2px solid #3c566b"></div>

<!-- ===== WINDOW 2 ENTRY ===== -->
<div class="win" style="left:252px;top:314px;width:644px;height:299px;background:#cddaea;border-color:#2f4457;overflow:visible;box-shadow:0 6px 10px -2px rgba(0,20,50,0.5),1px 1px 2px rgba(0,30,60,0.4)"></div>
<div class="a" style="left:253px;top:315px;width:642px;height:30px;background:#fff"></div>
<svg class="a" style="left:261px;top:321px" width="16" height="16"><use href="#n1mm"/></svg>
<div class="a ttl" style="left:282px;top:323px;color:#000;letter-spacing:-0.4px">7100,00 LSB Manual - VFO A</div>
<div class="a" style="left:776px;top:329px;width:11px;height:1px;background:#000"></div>
<div class="a" style="left:821px;top:324px;width:10px;height:10px;border:1px solid #c8c8c8"></div>
<svg class="a" style="left:867px;top:324px" width="11" height="11"><path d="M0.5 0.5L10.5 10.5M10.5 0.5L0.5 10.5" stroke="#000" stroke-width="1.1"/></svg>
<!-- menu -->
<div class="a" style="left:268px;top:351px;font-size:12px">Файл</div>
<div class="a" style="left:316px;top:351px;font-size:12px">Правка</div>
<div class="a" style="left:375px;top:351px;font-size:12px">Перегляд</div>
<div class="a" style="left:446px;top:351px;font-size:12px">Інструменти</div>
<div class="a" style="left:533px;top:351px;font-size:12px">Конфіг</div>
<div class="a" style="left:590px;top:351px;font-size:12px">Вікна</div>
<div class="a" style="left:638px;top:351px;font-size:12px">Допомога</div>
<!-- band labels -->
<div class="a" style="left:256px;top:370px;width:26px;text-align:center;font-size:11px;font-weight:bold">CW</div>
<div class="a" style="left:288px;top:370px;width:26px;text-align:center;font-size:11px;font-weight:bold">PH</div>
<div class="a" style="left:320px;top:370px;width:37px;text-align:center;font-size:11px;font-weight:bold">RTTY</div>
<div class="a" style="left:363px;top:370px;width:31px;text-align:center;font-size:11px;font-weight:bold">PSK</div>
<!-- band grid -->
<div class="band g" style="left:256px;top:386px;width:26px">160</div>
<div class="band r" style="left:256px;top:407px;width:26px;height:106px;line-height:21px;padding-top:1px">80<br>40<br>20<br>15<br>10</div>
<div class="band g" style="left:288px;top:386px;width:26px">160</div>
<div class="band r" style="left:288px;top:407px;width:26px;height:106px;line-height:21px;padding-top:1px">80<br>40<br>20<br>15<br>10</div>
<div class="a" style="left:290px;top:431px;width:22px;height:17px;border:1px solid #fff;border-radius:6px"></div>
<div class="band g" style="left:320px;top:386px;width:37px">160</div>
<div class="band r" style="left:320px;top:407px;width:37px;height:106px;line-height:21px;padding-top:1px">80<br>40<br>20<br>15<br>10</div>
<div class="band g" style="left:363px;top:386px;width:31px">160</div>
<div class="band r" style="left:363px;top:407px;width:31px;height:106px;line-height:21px;padding-top:1px">80<br>40<br>20<br>15<br>10</div>
<!-- call field -->
<div class="a" style="left:406px;top:385px;width:174px;height:32px;background:#fff"></div>
<div class="a mono" id="call" style="left:406px;top:388px;font-size:25px;line-height:30px;color:#d01818">IK0ZUT</div>
<div class="a" style="left:496px;top:386px;width:1px;height:30px;background:#000"></div>
<svg class="a" style="left:564px;top:391px" width="14" height="23" viewBox="0 0 14 23"><path d="M3.2 5.2C3.8 2.8 5.6 2 7.4 2C9.8 2 11.3 3.6 11.3 5.8C11.3 8.6 8 9.6 7.2 12.3V15.2" fill="none" stroke="#c41a1a" stroke-width="2.1"/><circle cx="7.2" cy="19.6" r="1.6" fill="#c41a1a"/></svg>
<div class="a" style="left:396px;top:375px;width:111px;height:51px;border:5px solid #fc8224;border-radius:13px"></div>
<div class="a" style="left:552px;top:376px;width:34px;height:51px;border:5px solid #fc8224;border-radius:9px"></div>
<!-- exchange fields -->
<div class="lbl" style="left:592px;top:371px">Snt</div>
<div class="lbl" style="left:665px;top:371px">SentNr</div>
<div class="lbl" style="left:738px;top:371px">Rcv</div>
<div class="lbl" style="left:811px;top:371px">Nr/Prov</div>
<div class="fld" style="left:589px;top:385px;width:69px;height:32px"></div>
<div class="fld" style="left:662px;top:385px;width:69px;height:32px"></div>
<div class="fld" style="left:735px;top:385px;width:69px;height:32px"></div>
<div class="fld" style="left:808px;top:385px;width:81px;height:32px"></div>
<div class="a mono" style="left:589px;top:388px;font-size:25px;line-height:30px">59</div>
<div class="a mono" style="left:715px;top:388px;font-size:25px;line-height:30px;color:#1010e0">1</div>
<div class="a mono" style="left:735px;top:388px;font-size:25px;line-height:30px">59</div>
<!-- dots & radios -->
<div class="a" style="left:412px;top:429px;width:14px;height:14px;border-radius:50%;background:#12a012"></div>
<div class="a" style="left:439px;top:429px;width:14px;height:14px;border-radius:50%;background:#f01010"></div>
<div class="a" style="left:467px;top:430px;width:13px;height:13px;border-radius:50%;background:#fff;border:1px solid #333"></div>
<div class="a" style="left:486px;top:430px;font-size:12px;letter-spacing:-0.2px">Run</div>
<div class="a" style="left:518px;top:430px;width:13px;height:13px;border-radius:50%;background:#fff;border:1px solid #333"></div>
<div class="a" style="left:521px;top:433px;width:7px;height:7px;border-radius:50%;background:#222"></div>
<div class="a" style="left:537px;top:430px;font-size:12px;letter-spacing:-0.8px">S&amp;P</div>
<!-- function keys -->
<div class="btn" style="left:403px;top:464px;width:78px;height:20px;line-height:19px;font-size:11.2px">F1 S&amp;P CQ</div>
<div class="btn" style="left:483px;top:464px;width:78px;height:20px;line-height:19px;font-size:11.2px">F2 Exch</div>
<div class="btn" style="left:563px;top:464px;width:78px;height:20px;line-height:19px;font-size:11.2px">F3 Spare</div>
<div class="btn" style="left:643px;top:464px;width:78px;height:20px;line-height:19px;font-size:11.2px">F4 UW1WU</div>
<div class="btn" style="left:723px;top:464px;width:78px;height:20px;line-height:19px;font-size:11.2px">F5 His Call</div>
<div class="btn" style="left:803px;top:464px;width:81px;height:20px;line-height:19px;font-size:11.2px">F6 Spare</div>
<div class="btn" style="left:403px;top:487px;width:78px;height:20px;line-height:19px;font-size:11.2px">F7 Rpt Exch</div>
<div class="btn" style="left:483px;top:487px;width:78px;height:20px;line-height:19px;font-size:11.2px">F8 Agn?</div>
<div class="btn" style="left:563px;top:487px;width:78px;height:20px;line-height:19px;font-size:11.2px">F9 Zone</div>
<div class="btn" style="left:643px;top:487px;width:78px;height:20px;line-height:19px;font-size:11.2px">F10 Spare</div>
<div class="btn" style="left:723px;top:487px;width:78px;height:20px;line-height:19px;font-size:11.2px">F11 Spare</div>
<div class="btn" style="left:803px;top:487px;width:81px;height:20px;line-height:19px;font-size:11.2px">F12 Wipe</div>
<div class="btn" style="left:403px;top:510px;width:108px;height:21px;line-height:20px;font-size:11.2px">Esc: Stop</div>
<div class="btn" style="left:514px;top:510px;width:50px;height:21px;line-height:20px;font-size:11.2px">Стерти</div>
<div class="btn" style="left:567px;top:510px;width:50px;height:21px;line-height:20px;font-size:11.2px">Лог</div>
<div class="btn" style="left:620px;top:510px;width:50px;height:21px;line-height:20px;font-size:11.2px">Правка</div>
<div class="btn" style="left:673px;top:510px;width:50px;height:21px;line-height:20px;font-size:11.2px">Познач</div>
<div class="btn" style="left:726px;top:510px;width:50px;height:21px;line-height:20px;font-size:11.2px">Внести</div>
<div class="btn" style="left:779px;top:510px;width:50px;height:21px;line-height:20px;font-size:11.2px">Спот</div>
<div class="btn" style="left:832px;top:510px;width:52px;height:21px;line-height:20px;font-size:11.2px">QRZ</div>
<!-- info lines -->
<div class="a mono" style="left:406px;top:536px;font-size:15px;line-height:18px;color:#111">Regional Hdg 233° LP 53° 1172km 728mi SR 04:04Z SS</div>
<div class="a mono" style="left:406px;top:559px;font-size:15px;line-height:18px;color:#1a1aa8">Call history текст з'являється за наявності.</div>
<!-- status bar -->
<div class="a" style="left:257px;top:597px;font-size:11px;letter-spacing:-0.2px">I: EU -&gt; ITALY, Zn 15</div>
<div class="a" style="left:675px;top:597px;font-size:11px">No Score</div>
<div class="a" style="left:871px;top:597px;font-size:11px">0</div>
<svg class="a" style="left:880px;top:598px" width="14" height="13"><g fill="#fff"><rect x="11" y="2" width="2" height="2"/><rect x="7" y="6" width="2" height="2"/><rect x="11" y="6" width="2" height="2"/><rect x="3" y="10" width="2" height="2"/><rect x="7" y="10" width="2" height="2"/><rect x="11" y="10" width="2" height="2"/></g><g fill="#8a9096"><rect x="10" y="1" width="2" height="2"/><rect x="6" y="5" width="2" height="2"/><rect x="10" y="5" width="2" height="2"/><rect x="2" y="9" width="2" height="2"/><rect x="6" y="9" width="2" height="2"/><rect x="10" y="9" width="2" height="2"/></g></svg>

<!-- ===== WINDOW 3 SCORE ===== -->
<div class="win" style="left:896px;top:0;width:544px;height:205px;background:#f0f0f0;border-color:#2c4a66;border-bottom-color:#e8eef4;box-shadow:0 4px 12px rgba(0,10,50,0.4)"></div>
<div class="a" style="left:897px;top:1px;width:542px;height:30px;background:#fff"></div>
<div class="a" style="left:897px;top:31px;width:542px;height:1px;background:#777b80"></div><div class="a" style="left:897px;top:32px;width:542px;height:1px;background:#fbfeff"></div>
<svg class="a" style="left:905px;top:7px" width="16" height="16"><use href="#n1mm"/></svg>
<div class="a ttl" style="left:926px;top:9px;color:#9b9b9b;letter-spacing:-0.3px">Score - 0 Points</div>
<svg class="a" style="left:1419px;top:10px" width="11" height="11"><path d="M0.5 0.5L10.5 10.5M10.5 0.5L0.5 10.5" stroke="#9b9b9b" stroke-width="1"/></svg>
<div class="a" style="left:898px;top:33px;width:541px;height:171px;background:#cddaea;border-left:1px solid #a8aeb4"></div>
<div class="a mono" style="left:903px;top:35px;font-size:11.67px;line-height:15px;color:#000;white-space:pre">Contest: ARIDX
 Band   Mode  QSOs     Pts  DXC  Pro  Pt/Q
1 Mult = 1,0 Q's</div>
<div class="a" style="left:1423px;top:34px;width:14px;height:22px;background:#c2c2c2"></div>
<div class="a" style="left:1424px;top:35px;width:12px;height:9px;background:#f0f0f0"></div>
<div class="a" style="left:1424px;top:46px;width:12px;height:9px;background:#f0f0f0"></div>
<svg class="a" style="left:1424px;top:35px" width="12" height="20"><path d="M3 6.5h6L6 3.5Z M3 13.5h6L6 16.5Z" fill="#000"/></svg>
<div class="a" style="left:1365px;top:181px;width:73px;height:22px;background:#fdfaf2;border:2px solid #1d62aa;box-shadow:inset 0 0 0 1px #d8f0ff;font-size:12px;text-align:center;line-height:18px;letter-spacing:-0.4px">Rescore</div>

<!-- ===== WINDOW 4 CHECK ===== -->
<div class="win" style="left:896px;top:452px;width:544px;height:162px;background:#fbfdfe;border-color:#2c4a66;border-bottom-color:#f4f8fb;box-shadow:0 4px 12px rgba(0,10,50,0.4),0 1px 2px rgba(0,10,60,0.5)"></div>
<div class="a" style="left:897px;top:453px;width:542px;height:30px;background:#fff"></div>
<div class="a" style="left:897px;top:483px;width:542px;height:1px;background:#909494"></div>
<svg class="a" style="left:905px;top:459px" width="16" height="16"><use href="#n1mm"/></svg>
<div class="a ttl" style="left:926px;top:461px;color:#9b9b9b;letter-spacing:0px">Check Log/Master/Telnet/Exch/Call history/Reverse lookup</div>
<svg class="a" style="left:1419px;top:462px" width="11" height="11"><path d="M0.5 0.5L10.5 10.5M10.5 0.5L0.5 10.5" stroke="#9b9b9b" stroke-width="1"/></svg>
<div class="a" style="left:898px;top:484px;width:539px;height:95px;background:#f2faff;border:1px solid #a6a6a6;border-top-color:#f8fcff"></div>
<div class="a" style="left:1004px;top:485px;width:1px;height:93px;background:#8c8c8c"></div>
<div class="a" style="left:1111px;top:485px;width:1px;height:93px;background:#8c8c8c"></div>
<div class="a" style="left:1218px;top:485px;width:1px;height:93px;background:#8c8c8c"></div>
<div class="a" style="left:1325px;top:485px;width:1px;height:93px;background:#8c8c8c"></div>
<div class="a" style="left:898px;top:585px;width:539px;height:27px;background:#f2faff;border:1px solid #a6a6a6"></div>
<div class="a" style="left:1423px;top:485px;width:14px;height:22px;background:#c2c2c2"></div>
<div class="a" style="left:1424px;top:486px;width:12px;height:9px;background:#f0f0f0"></div>
<div class="a" style="left:1424px;top:497px;width:12px;height:9px;background:#f0f0f0"></div>
<svg class="a" style="left:1424px;top:486px" width="12" height="20"><path d="M3 6.5h6L6 3.5Z M3 13.5h6L6 16.5Z" fill="#000"/></svg>
<!-- entries -->
<div class="a" style="left:1015px;top:487px;width:7px;height:14px;background:#e03c3c"></div>
<div class="a" style="left:1029px;top:501px;width:7px;height:15px;background:#e03c3c"></div>
<div class="a mono" style="left:1009px;top:487px;font-size:11px;line-height:15px;color:#1a1a9a;white-space:pre">I<span style="color:#ffb0b0">0</span>ZUT
IK0<span style="color:#ffb0b0">Y</span>UT</div>
<div class="a" style="left:1228px;top:487px;width:7px;height:14px;background:#e03c3c"></div>
<div class="a" style="left:1242px;top:501px;width:7px;height:15px;background:#e03c3c"></div>
<div class="a mono" style="left:1222px;top:487px;font-size:11px;line-height:15px;color:#1a1a9a;white-space:pre">I<span style="color:#ffb0b0">0</span>ZUT
IK0<span style="color:#ffb0b0">Y</span>UT</div>
<div class="a" style="left:989px;top:477px;width:69px;height:52px;border:5px solid #fc8224;border-radius:12px"></div>

<!-- ===== TASKBAR ===== -->
<div class="a" style="left:0;top:860px;width:1440px;height:40px;background:linear-gradient(90deg,#223842 0%,#22363f 40%,#22333f 60%,#1e2d42 80%,#1c2a42 100%)"></div>
<!-- start -->
<svg class="a" style="left:15px;top:871px" width="18" height="18" viewBox="0 0 18 18"><path d="M0.5 2.6L7.6 1.6V8.3H0.5Z M8.6 1.4L17.5 0.2V8.3H8.6Z M0.5 9.3H7.6V16.2L0.5 15.2Z M8.6 9.3H17.5V17.6L8.6 16.4Z" fill="#fff"/></svg>
<!-- search -->
<div class="a" style="left:48px;top:860px;width:288px;height:40px;background:#f2f2f2"></div>
<svg class="a" style="left:59px;top:871px" width="18" height="18" viewBox="0 0 18 18"><circle cx="10.5" cy="7" r="5.3" fill="none" stroke="#111" stroke-width="1.3"/><path d="M6.8 10.8L1.2 16.8" stroke="#111" stroke-width="1.5"/></svg>
<div class="a" style="left:88px;top:871px;font-size:15.5px;color:#333;letter-spacing:-0.1px">Пошук</div>
<!-- task view -->
<svg class="a" style="left:351px;top:871px" width="18" height="17" viewBox="0 0 18 17"><g fill="none" stroke="#fff" stroke-width="1.3"><path d="M0.5 1h10M0.5 16h10"/><rect x="1.5" y="4" width="8" height="9"/><path d="M14 0.5v3M14 13.5v3"/></g><rect x="12.5" y="5.5" width="3.5" height="4" fill="#fff"/></svg>
<!-- edge -->
<svg class="a" style="left:399px;top:868px" width="25" height="25" viewBox="0 0 25 25">
<defs><linearGradient id="edg1" x1="0" y1="0" x2="1" y2="1"><stop offset="0" stop-color="#35c1f1"/><stop offset="0.6" stop-color="#4fd67a"/><stop offset="1" stop-color="#2e9be8"/></linearGradient>
<linearGradient id="edg2" x1="0" y1="0" x2="0" y2="1"><stop offset="0" stop-color="#1c8ee0"/><stop offset="1" stop-color="#1652b8"/></linearGradient></defs>
<circle cx="12.5" cy="12.5" r="12" fill="url(#edg1)"/>
<path d="M1 11C2 4 10 1 16 4C21 6 24 11 22 15C19 17 13 16 12 13C11 11 13 10 14 10C12 8 7 9 6 13C5 18 9 23 13 24.5C6 25 0.5 19 1 11Z" fill="url(#edg2)"/>
<path d="M14 10C12 8 7 9 6 13C5 18 9 23 13 24.5C17 24 20 22 22 19C18 21 13 20 11 16C10 13 12 11 14 10Z" fill="#0f3e8c" opacity="0.55"/>
</svg>
<!-- explorer -->
<svg class="a" style="left:448px;top:870px" width="24" height="20" viewBox="0 0 24 20"><path d="M0 1.5H8L10 3.5H23V19H0Z" fill="#e8b830"/><rect x="0" y="5" width="23" height="14" fill="#f8d66a"/><path d="M5 19V12H18V19H14.5V15H8.5V19Z" fill="#3c8ed8"/></svg>
<div class="a" style="left:440px;top:898px;width:40px;height:2px;background:#76b9ed"></div>
<!-- store -->
<svg class="a" style="left:497px;top:868px" width="24" height="24" viewBox="0 0 24 24"><path d="M8 7V4.5A4 4 0 0 1 16 4.5V7" fill="none" stroke="#fff" stroke-width="1.4"/><rect x="0.5" y="6.5" width="23" height="17" rx="1" fill="#fff"/><rect x="7" y="10" width="4.5" height="4.5" fill="#f25022"/><rect x="12.5" y="10" width="4.5" height="4.5" fill="#7fba00"/><rect x="7" y="15.5" width="4.5" height="4.5" fill="#00a4ef"/><rect x="12.5" y="15.5" width="4.5" height="4.5" fill="#ffb900"/></svg>
<!-- mail -->
<svg class="a" style="left:546px;top:870px" width="25" height="20" viewBox="0 0 25 20"><path d="M0 6L12.5 0L25 6V19.5H0Z" fill="#fff"/><path d="M0.5 7L24 7.5L9 11.5L17 18.5L7 12Z" fill="#22333f"/></svg>
<!-- floppy -->
<svg class="a" style="left:595px;top:868px" width="24" height="24" viewBox="0 0 24 24"><rect x="0.5" y="0.5" width="23" height="23" rx="2" fill="#2848c8" stroke="#8090e0" stroke-width="0.8"/><rect x="6" y="1" width="11" height="7" fill="#e8e8f0"/><rect x="12" y="2" width="3" height="5" fill="#2848c8"/><rect x="3" y="11" width="18" height="12" fill="#fff"/><path d="M4 13.5h16M4 16h16M4 18.5h10" stroke="#e87878" stroke-width="1"/><text x="15" y="22.5" font-size="5" font-family="Liberation Sans" fill="#000">21</text></svg>
<!-- app -->
<svg class="a" style="left:644px;top:868px" width="23" height="23" viewBox="0 0 23 23"><rect x="0" y="0" width="23" height="22" fill="#0a2ad8" stroke="#38c8f0" stroke-width="1"/><path d="M7.5 0V22M12 0V22M18 0V22" stroke="#40d0ff" stroke-width="0.9"/><path d="M2 4h4M2 8h4M2 12h4M13 4h4M13 8h4M13 16h4" stroke="#80e0ff" stroke-width="0.8"/><rect x="0" y="21" width="23" height="2" fill="#20a040"/></svg>
<!-- n1mm active -->
<div class="a" style="left:681px;top:860px;width:48px;height:40px;background:#4c5b65"></div>
<svg class="a" style="left:693px;top:868px" width="24" height="24"><use href="#n1mm"/></svg>
<div class="a" style="left:681px;top:898px;width:48px;height:2px;background:#76b9ed"></div>
<!-- weather -->
<svg class="a" style="left:1036px;top:867px" width="28" height="24" viewBox="0 0 28 24"><path d="M11 1A7 7 0 1 0 18 10A5.5 5.5 0 0 1 11 1Z" fill="#f0b040"/><path d="M5 23H22A5 5 0 0 0 22 13A7 7 0 0 0 9 12A5.5 5.5 0 0 0 5 23Z" fill="#b8d0f4"/><path d="M5 23H22A5 5 0 0 0 25 20H3Z" fill="#8eb0e8"/></svg>
<div class="a" style="left:1070px;top:871px;font-size:15px;color:#fff;letter-spacing:-0.2px">14°C</div>
<div class="a" style="left:1108px;top:871px;font-size:15px;color:#fff;letter-spacing:-0.3px">Mostly cloudy</div>
<!-- tray -->
<svg class="a" style="left:1218px;top:874px" width="14" height="10" viewBox="0 0 14 10"><path d="M0.8 8.5L7 2L13.2 8.5" fill="none" stroke="#fff" stroke-width="1.3"/></svg>
<svg class="a" style="left:1240px;top:870px" width="19" height="19" viewBox="0 0 19 19"><g fill="none" stroke="#fff" stroke-width="1.2"><circle cx="8.5" cy="8.5" r="7.5"/><ellipse cx="8.5" cy="8.5" rx="3.3" ry="7.5"/><path d="M1 8.5h15M2.5 4.5h12M2.5 12.5h9"/></g><circle cx="14.5" cy="14.5" r="4" fill="#1c2a42" stroke="#fff" stroke-width="1.1"/><path d="M12 17L17 12" stroke="#fff" stroke-width="1.1"/></svg>
<svg class="a" style="left:1264px;top:873px" width="18" height="15" viewBox="0 0 18 15"><path d="M1 5H4L8 1.5V13.5L4 10H1Z" fill="none" stroke="#fff" stroke-width="1.1"/><path d="M10.5 5A3 3 0 0 1 10.5 10M12.5 3A6 6 0 0 1 12.5 12M14.8 1A9 9 0 0 1 14.8 14" fill="none" stroke="#fff" stroke-width="1"/></svg>
<div class="a" style="left:1291px;top:873px;font-size:12px;color:#fff;letter-spacing:-0.2px">ENG</div>
<div class="a" style="left:1340px;top:864px;font-size:12px;color:#fff;letter-spacing:-0.2px">23:37</div>
<div class="a" style="left:1327px;top:882px;font-size:12px;color:#fff;letter-spacing:-0.5px">30.04.2024</div>
<svg class="a" style="left:1398px;top:871px" width="26" height="26" viewBox="0 0 26 26"><path d="M1 1H19V13H8L4 17V13H1Z" fill="#fff"/><path d="M4 4.5h12M4 7.5h12M4 10.5h8" stroke="#1c2a42" stroke-width="1.1"/><circle cx="17" cy="17" r="7.5" fill="#2c3440" stroke="#9aa0a8" stroke-width="1.2"/><text x="17" y="21.5" text-anchor="middle" font-size="12" font-family="Liberation Sans" fill="#fff">1</text></svg>
<div class="a" style="left:1435px;top:866px;width:1px;height:34px;background:#5a6880"></div>

</body></html>
